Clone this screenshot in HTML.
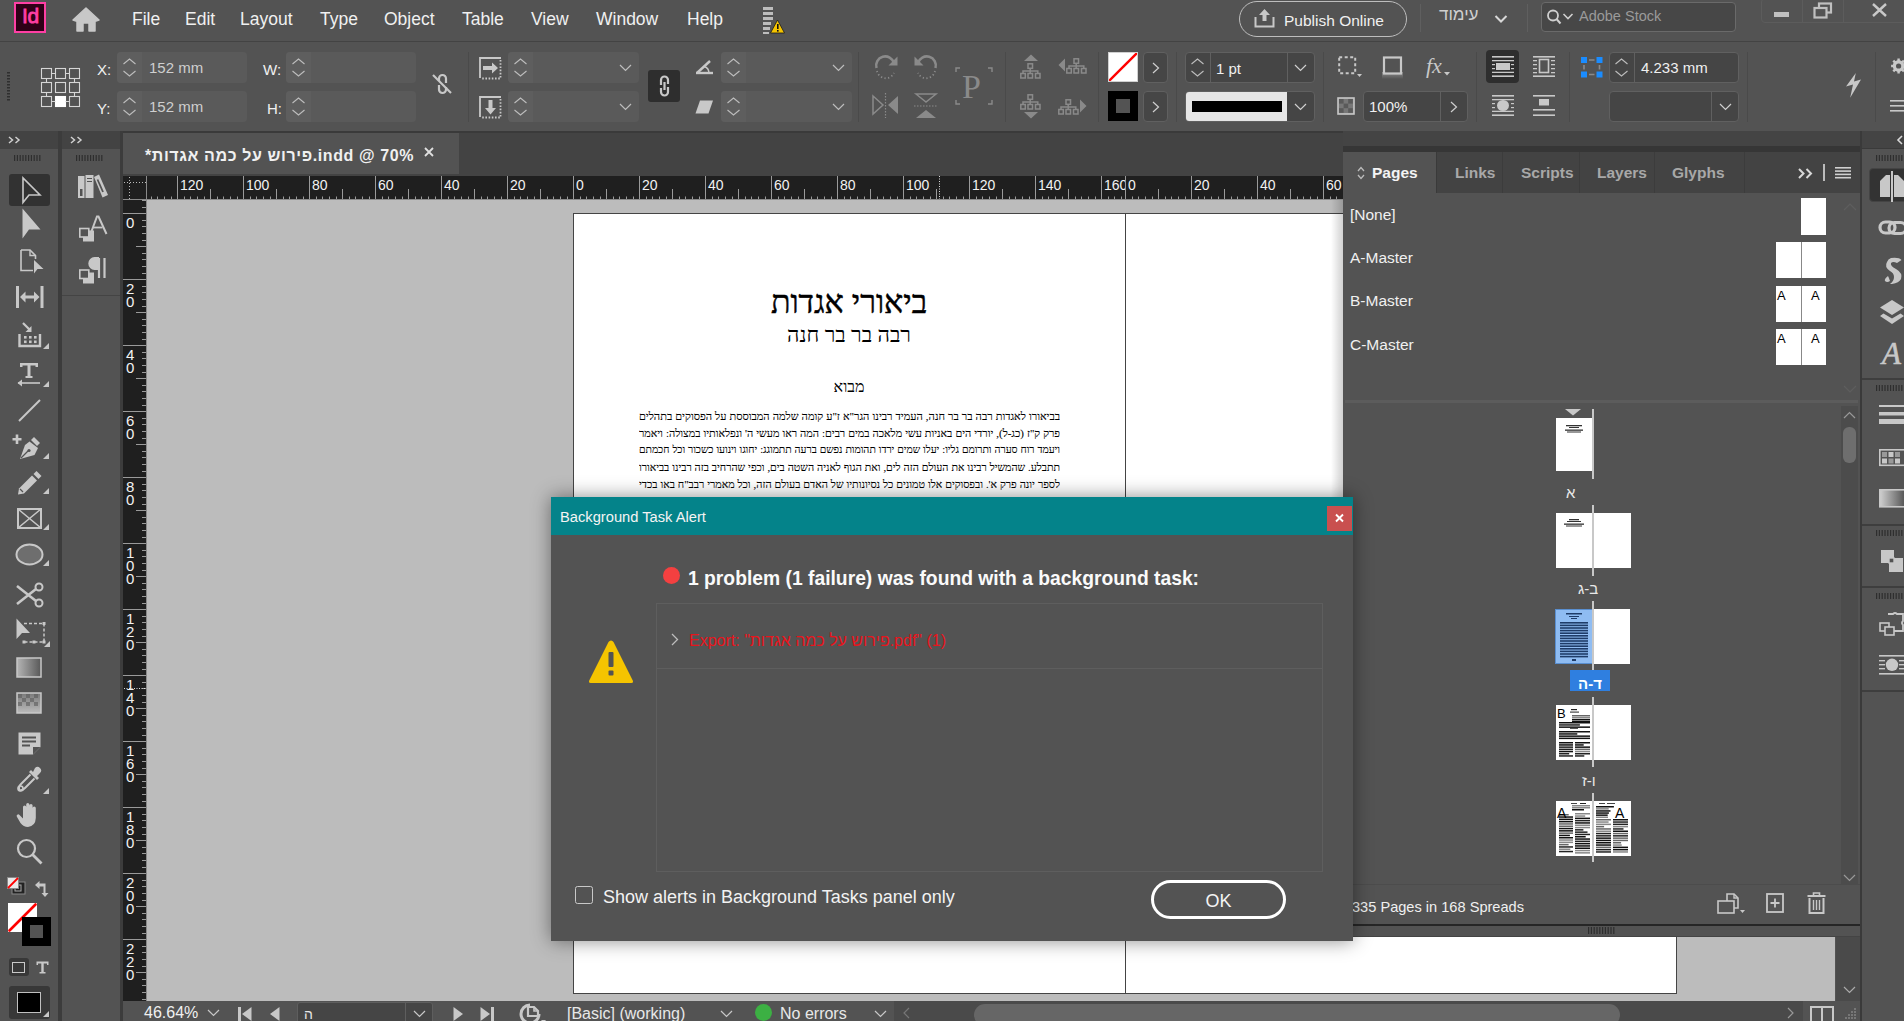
<!DOCTYPE html>
<html><head><meta charset="utf-8">
<style>
*{box-sizing:border-box;margin:0;padding:0}
html,body{width:1904px;height:1021px;overflow:hidden;background:#535353;font-family:"Liberation Sans",sans-serif;color:#e8e8e8}
.a{position:absolute}
svg{position:absolute;overflow:visible}
.t{position:absolute;white-space:nowrap;line-height:1}
.cl{font-size:15px;line-height:15px;color:#f0f0f0}
.cv{font-size:15px;line-height:15px;color:#cfcfcf}
.rl{top:178px;font-size:14px;line-height:14px;color:#f2f2f2}
.vrl{font-size:15px;line-height:13px;color:#f2f2f2;white-space:normal;width:12px}
.pl{left:639px;width:421px;font-family:"Liberation Serif";font-size:12.5px;line-height:14px;color:#000;-webkit-text-stroke:0.12px #000;direction:rtl;text-align:justify;text-align-last:justify;white-space:nowrap;overflow:hidden}
.ptab{top:165px;font-size:15.5px;line-height:16px;font-weight:700;color:#a8a8a8}
.pm{left:1350px;margin-top:1px;font-size:15.5px;line-height:16px;color:#f0f0f0}
.mi{top:10px;font-size:17.5px;line-height:18px;color:#f0f0f0}
</style></head><body>

<!-- MENU BAR -->
<div id="menubar" class="a" style="left:0;top:0;width:1904px;height:41px;background:#535353">
<div class="a" style="left:14px;top:2px;width:32px;height:31px;background:#2e0017;border:2px solid #ff3fa4"></div>
<div class="t" style="left:22px;top:5px;font-size:21px;line-height:22px;font-weight:400;color:#ff3fa4;letter-spacing:-0.3px;-webkit-text-stroke:0.8px #ff3fa4">Id</div>
<svg style="left:72px;top:7px" width="28" height="25" viewBox="0 0 28 25"><path d="M14 1 L27 13 L24 14 L23 14 V24 H17 V16 H11 V24 H5 V14 L4 14 L1 13 Z" fill="#c8c8c8" stroke="#c8c8c8" stroke-width="1.5" stroke-linejoin="round"/></svg>
<div class="t mi" style="left:132px">File</div>
<div class="t mi" style="left:185px">Edit</div>
<div class="t mi" style="left:240px">Layout</div>
<div class="t mi" style="left:320px">Type</div>
<div class="t mi" style="left:384px">Object</div>
<div class="t mi" style="left:462px">Table</div>
<div class="t mi" style="left:531px">View</div>
<div class="t mi" style="left:596px">Window</div>
<div class="t mi" style="left:687px">Help</div>
<svg style="left:762px;top:6px" width="24" height="28" viewBox="0 0 24 28"><g fill="#bdbdbd"><rect x="1" y="1" width="10" height="3"/><rect x="1" y="6" width="10" height="3"/><rect x="1" y="11" width="10" height="3"/><rect x="1" y="16" width="8" height="3"/><rect x="1" y="21" width="7" height="3"/><rect x="1" y="26" width="6" height="2"/></g><path d="M15.5 14 L22.5 27 H8.5 Z" fill="#f5c400" stroke="#1a1a1a" stroke-width="0.8"/><rect x="15" y="18" width="1.6" height="5" fill="#111"/><rect x="15" y="24" width="1.6" height="1.6" fill="#111"/></svg>
<div class="a" style="left:1239px;top:1px;width:168px;height:36px;border:1.5px solid #bdbdbd;border-radius:18px"></div>
<svg style="left:1254px;top:8px" width="21" height="20" viewBox="0 0 21 20"><path d="M10.5 1 L16 7 H12.5 V13 H8.5 V7 H5 Z" fill="#c8c8c8"/><path d="M1.5 9 V18.5 H19.5 V9" fill="none" stroke="#c8c8c8" stroke-width="2"/></svg>
<div class="t" style="left:1284px;top:13px;font-size:15.5px;line-height:16px;color:#f0f0f0">Publish Online</div>
<div class="a" style="left:1420px;top:4px;width:1px;height:28px;background:#5f5f5f"></div>
<div class="t" style="left:1439px;top:6px;font-size:17px;line-height:18px;color:#cfcfcf">&#1506;&#1497;&#1502;&#1493;&#1491;</div>
<svg style="left:1494px;top:14px" width="14" height="10" viewBox="0 0 14 10"><path d="M1.5 2 L7 7.5 L12.5 2" fill="none" stroke="#d8d8d8" stroke-width="2"/></svg>
<div class="a" style="left:1527px;top:4px;width:1px;height:28px;background:#5f5f5f"></div>
<div class="a" style="left:1541px;top:2px;width:195px;height:30px;background:#474747;border:1px solid #6a6a6a;border-radius:4px"></div>
<svg style="left:1546px;top:9px" width="32" height="17" viewBox="0 0 32 17"><circle cx="7" cy="6.5" r="5" fill="none" stroke="#cfcfcf" stroke-width="1.8"/><path d="M10.5 10 L14.5 14.5" stroke="#cfcfcf" stroke-width="2"/><path d="M17.5 5 L22 9.5 L26.5 5" fill="none" stroke="#cfcfcf" stroke-width="1.6"/></svg>
<div class="t" style="left:1579px;top:9px;font-size:14.5px;line-height:15px;color:#9a9a9a">Adobe Stock</div>
<div class="a" style="left:1761px;top:-2px;width:150px;height:25px;border:1px solid #5c5c5c;border-radius:4px"></div>
<div class="a" style="left:1802px;top:0;width:1px;height:23px;background:#5c5c5c"></div>
<div class="a" style="left:1843px;top:0;width:1px;height:23px;background:#5c5c5c"></div>
<div class="a" style="left:1774px;top:12px;width:15px;height:5px;background:#c0c0c0"></div>
<svg style="left:1813px;top:2px" width="20" height="17" viewBox="0 0 20 17"><rect x="6" y="1.5" width="12" height="9" fill="none" stroke="#c0c0c0" stroke-width="2.2"/><rect x="1.5" y="6" width="12" height="9.5" fill="#535353" stroke="#c0c0c0" stroke-width="2.2"/></svg>
<svg style="left:1871px;top:3px" width="17" height="14" viewBox="0 0 17 14"><path d="M2 1 L15 13 M15 1 L2 13" stroke="#c8c8c8" stroke-width="2.4"/></svg>
</div>
<div class="a" style="left:0;top:41px;width:1904px;height:1px;background:#434343"></div>

<!-- CONTROL BAR -->
<div id="ctrl" class="a" style="left:0;top:42px;width:1904px;height:89px;background:#535353"></div>
<svg style="left:7px;top:72px" width="4" height="30" viewBox="0 0 4 30"><g fill="#2f2f2f"><rect x="0" y="0" width="3" height="1.5"/><rect x="0" y="3" width="3" height="1.5"/><rect x="0" y="6" width="3" height="1.5"/><rect x="0" y="9" width="3" height="1.5"/><rect x="0" y="12" width="3" height="1.5"/><rect x="0" y="15" width="3" height="1.5"/><rect x="0" y="18" width="3" height="1.5"/><rect x="0" y="21" width="3" height="1.5"/><rect x="0" y="24" width="3" height="1.5"/><rect x="0" y="27" width="3" height="1.5"/></g></svg>
<svg style="left:41px;top:68px" width="38" height="38" viewBox="0 0 38 38"><g fill="none" stroke="#d6d6d6" stroke-width="1.1"><rect x="0.5" y="0.5" width="10" height="10"/><rect x="14.5" y="0.5" width="10" height="10"/><rect x="28.5" y="0.5" width="10" height="10"/><rect x="0.5" y="14.5" width="10" height="10"/><rect x="14.5" y="14.5" width="10" height="10"/><rect x="28.5" y="14.5" width="10" height="10"/><rect x="0.5" y="28.5" width="10" height="10"/><rect x="14.5" y="28.5" width="10" height="10" fill="#fff" stroke="#fff"/><rect x="28.5" y="28.5" width="10" height="10"/><path d="M10.5 5.5 H14.5 M24.5 5.5 H28.5 M10.5 33.5 H14.5 M24.5 33.5 H28.5 M5.5 10.5 V14.5 M5.5 24.5 V28.5 M33.5 10.5 V14.5 M33.5 24.5 V28.5"/></g></svg>
<div class="t cl" style="left:97px;top:62px">X:</div>
<div class="t cl" style="left:97px;top:101px">Y:</div>
<div class="a" style="left:117px;top:52px;width:130px;height:31px;background:#5a5a5a;border-radius:4px"></div><div class="a" style="left:117px;top:52px;width:25px;height:31px;background:#5e5e5e;border-radius:4px 0 0 4px"></div><svg style="left:122px;top:58px" width="15" height="19" viewBox="0 0 15 19"><path d="M1.5 6 L7.5 1 L13.5 6 M1.5 13 L7.5 18 L13.5 13" fill="none" stroke="#bdbdbd" stroke-width="1.1"/></svg>
<div class="a" style="left:117px;top:91px;width:130px;height:31px;background:#5a5a5a;border-radius:4px"></div><div class="a" style="left:117px;top:91px;width:25px;height:31px;background:#5e5e5e;border-radius:4px 0 0 4px"></div><svg style="left:122px;top:97px" width="15" height="19" viewBox="0 0 15 19"><path d="M1.5 6 L7.5 1 L13.5 6 M1.5 13 L7.5 18 L13.5 13" fill="none" stroke="#bdbdbd" stroke-width="1.1"/></svg>
<div class="t cv" style="left:149px;top:60px">152 mm</div>
<div class="t cv" style="left:149px;top:99px">152 mm</div>
<div class="t cl" style="left:263px;top:62px">W:</div>
<div class="t cl" style="left:267px;top:101px">H:</div>
<div class="a" style="left:286px;top:52px;width:130px;height:31px;background:#5a5a5a;border-radius:4px"></div><div class="a" style="left:286px;top:52px;width:25px;height:31px;background:#5e5e5e;border-radius:4px 0 0 4px"></div><svg style="left:291px;top:58px" width="15" height="19" viewBox="0 0 15 19"><path d="M1.5 6 L7.5 1 L13.5 6 M1.5 13 L7.5 18 L13.5 13" fill="none" stroke="#bdbdbd" stroke-width="1.1"/></svg>
<div class="a" style="left:286px;top:91px;width:130px;height:31px;background:#5a5a5a;border-radius:4px"></div><div class="a" style="left:286px;top:91px;width:25px;height:31px;background:#5e5e5e;border-radius:4px 0 0 4px"></div><svg style="left:291px;top:97px" width="15" height="19" viewBox="0 0 15 19"><path d="M1.5 6 L7.5 1 L13.5 6 M1.5 13 L7.5 18 L13.5 13" fill="none" stroke="#bdbdbd" stroke-width="1.1"/></svg>
<svg style="left:431px;top:72px" width="22" height="24" viewBox="0 0 22 24"><g fill="none" stroke="#c8c8c8" stroke-width="2.2"><path d="M8 9 V6.5 A3.5 3.5 0 0 1 15 6.5 V11"/><path d="M8 13 V17.5 A3.5 3.5 0 0 0 15 17.5 V15"/><path d="M2 3 L20 21"/></g></svg>
<div class="a" style="left:468px;top:52px;width:1px;height:70px;background:#4a4a4a"></div>
<svg style="left:479px;top:57px" width="23" height="22" viewBox="0 0 23 22"><path d="M1 21 V1 H22" fill="none" stroke="#c8c8c8" stroke-width="1.8"/><path d="M21.5 3 V21.5 H2" fill="none" stroke="#c8c8c8" stroke-width="1.8" stroke-dasharray="1.6 1.6"/><path d="M4 9 H13 V5.5 L19 11 L13 16.5 V13 H4 Z" fill="#c8c8c8"/></svg>
<svg style="left:479px;top:96px" width="23" height="22" viewBox="0 0 23 22"><path d="M1 21 V1 H22" fill="none" stroke="#c8c8c8" stroke-width="1.8"/><path d="M21.5 3 V21.5 H2" fill="none" stroke="#c8c8c8" stroke-width="1.8" stroke-dasharray="1.6 1.6"/><path d="M9.5 4 V12 H6 L11.5 18.5 L17 12 H13.5 V4 Z" fill="#c8c8c8"/></svg>
<div class="a" style="left:508px;top:52px;width:131px;height:31px;background:#5a5a5a;border-radius:4px"></div><div class="a" style="left:508px;top:52px;width:25px;height:31px;background:#5e5e5e;border-radius:4px 0 0 4px"></div><svg style="left:513px;top:58px" width="15" height="19" viewBox="0 0 15 19"><path d="M1.5 6 L7.5 1 L13.5 6 M1.5 13 L7.5 18 L13.5 13" fill="none" stroke="#bdbdbd" stroke-width="1.1"/></svg><svg style="left:619px;top:64px" width="13" height="8" viewBox="0 0 13 8"><path d="M1 1 L6.5 6.5 L12 1" fill="none" stroke="#bdbdbd" stroke-width="1.2"/></svg>
<div class="a" style="left:508px;top:91px;width:131px;height:31px;background:#5a5a5a;border-radius:4px"></div><div class="a" style="left:508px;top:91px;width:25px;height:31px;background:#5e5e5e;border-radius:4px 0 0 4px"></div><svg style="left:513px;top:97px" width="15" height="19" viewBox="0 0 15 19"><path d="M1.5 6 L7.5 1 L13.5 6 M1.5 13 L7.5 18 L13.5 13" fill="none" stroke="#bdbdbd" stroke-width="1.1"/></svg><svg style="left:619px;top:103px" width="13" height="8" viewBox="0 0 13 8"><path d="M1 1 L6.5 6.5 L12 1" fill="none" stroke="#bdbdbd" stroke-width="1.2"/></svg>
<div class="a" style="left:648px;top:70px;width:32px;height:32px;background:#2e2e2e;border-radius:3px"></div>
<svg style="left:656px;top:74px" width="16" height="24" viewBox="0 0 16 24"><g fill="none" stroke="#c8c8c8" stroke-width="2.2"><path d="M5 11 V6 A3.5 3.5 0 0 1 12 6 V10"/><path d="M5 14 V18 A3.5 3.5 0 0 0 12 18 V13"/><path d="M8.5 8 V16"/></g></svg>
<svg style="left:695px;top:59px" width="19" height="16" viewBox="0 0 19 16"><path d="M2 14 L15 2" stroke="#c8c8c8" stroke-width="2.4" fill="none"/><path d="M1 14 H18" stroke="#c8c8c8" stroke-width="2.4"/><path d="M9 7.5 A7 7 0 0 1 14 14" fill="none" stroke="#c8c8c8" stroke-width="1.5"/></svg>
<svg style="left:695px;top:100px" width="19" height="14" viewBox="0 0 19 14"><path d="M5 0.5 H18 L13.5 13.5 H0.5 Z" fill="#c8c8c8"/></svg>
<div class="a" style="left:721px;top:52px;width:131px;height:31px;background:#5a5a5a;border-radius:4px"></div><div class="a" style="left:721px;top:52px;width:25px;height:31px;background:#5e5e5e;border-radius:4px 0 0 4px"></div><svg style="left:726px;top:58px" width="15" height="19" viewBox="0 0 15 19"><path d="M1.5 6 L7.5 1 L13.5 6 M1.5 13 L7.5 18 L13.5 13" fill="none" stroke="#bdbdbd" stroke-width="1.1"/></svg><svg style="left:832px;top:64px" width="13" height="8" viewBox="0 0 13 8"><path d="M1 1 L6.5 6.5 L12 1" fill="none" stroke="#bdbdbd" stroke-width="1.2"/></svg>
<div class="a" style="left:721px;top:91px;width:131px;height:31px;background:#5a5a5a;border-radius:4px"></div><div class="a" style="left:721px;top:91px;width:25px;height:31px;background:#5e5e5e;border-radius:4px 0 0 4px"></div><svg style="left:726px;top:97px" width="15" height="19" viewBox="0 0 15 19"><path d="M1.5 6 L7.5 1 L13.5 6 M1.5 13 L7.5 18 L13.5 13" fill="none" stroke="#bdbdbd" stroke-width="1.1"/></svg><svg style="left:832px;top:103px" width="13" height="8" viewBox="0 0 13 8"><path d="M1 1 L6.5 6.5 L12 1" fill="none" stroke="#bdbdbd" stroke-width="1.2"/></svg>
<div class="a" style="left:858px;top:52px;width:1px;height:70px;background:#4a4a4a"></div>
<svg style="left:873px;top:54px" width="26" height="26" viewBox="0 0 26 26"><path d="M3.5 14 A9 9 0 0 1 21 9" fill="none" stroke="#8a8a8a" stroke-width="2.6"/><path d="M24.5 2.5 V11.5 H15.5 Z" fill="#8a8a8a"/><path d="M4 17 A9 9 0 0 0 21 19" fill="none" stroke="#8a8a8a" stroke-width="1.8" stroke-dasharray="1.2 2.4"/></svg>
<svg style="left:913px;top:54px" width="26" height="26" viewBox="0 0 26 26"><path d="M22.5 14 A9 9 0 0 0 5 9" fill="none" stroke="#8a8a8a" stroke-width="2.6"/><path d="M1.5 2.5 V11.5 H10.5 Z" fill="#8a8a8a"/><path d="M22 17 A9 9 0 0 1 5 19" fill="none" stroke="#8a8a8a" stroke-width="1.8" stroke-dasharray="1.2 2.4"/></svg>
<svg style="left:872px;top:93px" width="27" height="25" viewBox="0 0 27 25"><path d="M1 3 L11 12 L1 21 Z" fill="none" stroke="#8a8a8a" stroke-width="1.5"/><path d="M26 3 L16 12 L26 21 Z" fill="#8a8a8a"/><path d="M13.5 0 V25" stroke="#8a8a8a" stroke-width="1.2" stroke-dasharray="1.5 1.5"/></svg>
<svg style="left:914px;top:93px" width="24" height="26" viewBox="0 0 24 26"><path d="M2 1 L12 9 L22 1 Z" fill="none" stroke="#8a8a8a" stroke-width="1.5"/><path d="M2 25 L12 17 L22 25 Z" fill="#8a8a8a"/><path d="M0 13 H24" stroke="#8a8a8a" stroke-width="1.2" stroke-dasharray="1.5 1.5"/></svg>
<svg style="left:955px;top:67px" width="38" height="38" viewBox="0 0 38 38"><g fill="none" stroke="#8a8a8a" stroke-width="1.4"><path d="M1 5 V1 H5 M33 1 H37 V5 M37 33 V37 H33 M5 37 H1 V33"/></g></svg>
<div class="t" style="left:962px;top:70px;font-family:'Liberation Serif';font-size:34px;line-height:34px;color:#8a8a8a">P</div>
<div class="a" style="left:1005px;top:52px;width:1px;height:70px;background:#4a4a4a"></div>
<svg style="left:1021px;top:54px" width="20" height="8" viewBox="0 0 20 8"><path d="M3 7 L10 0.5 L17 7 Z" fill="#8a8a8a"/></svg>
<svg style="left:1020px;top:63px" width="21" height="16" viewBox="0 0 21 16"><g fill="none" stroke="#8a8a8a" stroke-width="1.5"><rect x="8" y="0.8" width="4.5" height="4.5"/><rect x="0.8" y="10.5" width="4.5" height="4.5"/><rect x="8" y="10.5" width="4.5" height="4.5"/><rect x="15.5" y="10.5" width="4.5" height="4.5"/><path d="M10.2 5.3 V10.5 M3 10.5 V8 H17.8 V10.5"/></g></svg>
<svg style="left:1020px;top:94px" width="21" height="16" viewBox="0 0 21 16"><g fill="none" stroke="#8a8a8a" stroke-width="1.5"><rect x="8" y="0.8" width="4.5" height="4.5"/><rect x="0.8" y="10.5" width="4.5" height="4.5"/><rect x="8" y="10.5" width="4.5" height="4.5"/><rect x="15.5" y="10.5" width="4.5" height="4.5"/><path d="M10.2 5.3 V10.5 M3 10.5 V8 H17.8 V10.5"/></g></svg>
<svg style="left:1021px;top:111px" width="20" height="8" viewBox="0 0 20 8"><path d="M3 1 L10 7.5 L17 1 Z" fill="#8a8a8a"/></svg>
<svg style="left:1058px;top:58px" width="8" height="14" viewBox="0 0 8 14"><path d="M7 0.5 L0.5 7 L7 13.5 Z" fill="#8a8a8a"/></svg>
<svg style="left:1066px;top:58px" width="21" height="16" viewBox="0 0 21 16"><g fill="none" stroke="#8a8a8a" stroke-width="1.5"><rect x="8" y="0.8" width="4.5" height="4.5"/><rect x="0.8" y="10.5" width="4.5" height="4.5"/><rect x="8" y="10.5" width="4.5" height="4.5"/><rect x="15.5" y="10.5" width="4.5" height="4.5"/><path d="M10.2 5.3 V10.5 M3 10.5 V8 H17.8 V10.5"/></g></svg>
<svg style="left:1058px;top:99px" width="21" height="16" viewBox="0 0 21 16"><g fill="none" stroke="#8a8a8a" stroke-width="1.5"><rect x="8" y="0.8" width="4.5" height="4.5"/><rect x="0.8" y="10.5" width="4.5" height="4.5"/><rect x="8" y="10.5" width="4.5" height="4.5"/><rect x="15.5" y="10.5" width="4.5" height="4.5"/><path d="M10.2 5.3 V10.5 M3 10.5 V8 H17.8 V10.5"/></g></svg>
<svg style="left:1079px;top:99px" width="8" height="14" viewBox="0 0 8 14"><path d="M1 0.5 L7.5 7 L1 13.5 Z" fill="#8a8a8a"/></svg>
<div class="a" style="left:1098px;top:52px;width:1px;height:70px;background:#4a4a4a"></div>
<div class="a" style="left:1108px;top:52px;width:30px;height:30px;background:#fff;border:1px solid #d0d0d0;overflow:hidden"><svg style="left:0;top:0" width="28" height="28" viewBox="0 0 28 28"><path d="M0 28 L28 0" stroke="#f00" stroke-width="2.4"/></svg></div>
<div class="a" style="left:1108px;top:91px;width:30px;height:30px;background:#000"></div>
<div class="a" style="left:1116px;top:99px;width:14px;height:14px;background:#535353"></div>
<div class="a" style="left:1143px;top:52px;width:25px;height:31px;background:#464646;border:1px solid #606060;border-radius:4px"></div><svg style="left:1152px;top:62px" width="8" height="12" viewBox="0 0 8 12"><path d="M1 1 L6.5 6 L1 11" fill="none" stroke="#cfcfcf" stroke-width="1.2"/></svg>
<div class="a" style="left:1143px;top:91px;width:25px;height:31px;background:#464646;border:1px solid #606060;border-radius:4px"></div><svg style="left:1152px;top:101px" width="8" height="12" viewBox="0 0 8 12"><path d="M1 1 L6.5 6 L1 11" fill="none" stroke="#cfcfcf" stroke-width="1.2"/></svg>
<div class="a" style="left:1176px;top:52px;width:1px;height:70px;background:#4a4a4a"></div>
<div class="a" style="left:1185px;top:52px;width:130px;height:31px;background:#454545;border:1px solid #606060;border-radius:4px"></div>
<div class="a" style="left:1210px;top:53px;width:1px;height:29px;background:#606060"></div>
<div class="a" style="left:1287px;top:53px;width:1px;height:29px;background:#606060"></div>
<svg style="left:1190px;top:58px" width="15" height="19" viewBox="0 0 15 19"><path d="M1.5 6 L7.5 1 L13.5 6 M1.5 13 L7.5 18 L13.5 13" fill="none" stroke="#bdbdbd" stroke-width="1.1"/></svg>
<div class="t cv" style="left:1216px;top:61px;color:#f0f0f0">1 pt</div>
<svg style="left:1294px;top:64px" width="13" height="8" viewBox="0 0 13 8"><path d="M1 1 L6.5 6.5 L12 1" fill="none" stroke="#d0d0d0" stroke-width="1.2"/></svg>
<div class="a" style="left:1185px;top:91px;width:130px;height:31px;background:#454545;border:1px solid #606060;border-radius:4px"></div>
<div class="a" style="left:1186px;top:92px;width:101px;height:29px;background:#e6e6e6;border-radius:3px 0 0 3px"></div>
<div class="a" style="left:1192px;top:101px;width:90px;height:11px;background:#000"></div>
<svg style="left:1294px;top:103px" width="13" height="8" viewBox="0 0 13 8"><path d="M1 1 L6.5 6.5 L12 1" fill="none" stroke="#d0d0d0" stroke-width="1.2"/></svg>
<div class="a" style="left:1323px;top:52px;width:1px;height:70px;background:#4a4a4a"></div>
<svg style="left:1338px;top:56px" width="25" height="22" viewBox="0 0 25 22"><rect x="1.2" y="1.2" width="16" height="16" fill="none" stroke="#c8c8c8" stroke-width="2" stroke-dasharray="3 2.5"/><path d="M19 18 H24 L21.5 21 Z" fill="#c8c8c8"/></svg>
<svg style="left:1382px;top:56px" width="22" height="24" viewBox="0 0 22 24"><defs><linearGradient id="sg" x1="0" y1="0" x2="0" y2="1"><stop offset="0" stop-color="#8a8a8a"/><stop offset="1" stop-color="#535353"/></linearGradient></defs><rect x="0" y="16" width="21" height="7" fill="url(#sg)"/><rect x="2" y="1.5" width="17" height="16" fill="#535353" stroke="#c8c8c8" stroke-width="2.2"/></svg>
<div class="t" style="left:1426px;top:55px;font-family:'Liberation Serif';font-style:italic;font-size:22px;line-height:22px;color:#c8c8c8">fx</div>
<svg style="left:1444px;top:72px" width="6" height="4" viewBox="0 0 6 4"><path d="M0 0 H6 L3 3.5 Z" fill="#c8c8c8"/></svg>
<svg style="left:1337px;top:97px" width="18" height="18" viewBox="0 0 18 18"><rect x="1" y="1" width="16" height="16" fill="#777" stroke="#c8c8c8" stroke-width="1.6"/><g fill="#5a5a5a"><rect x="2" y="2" width="4.6" height="4.6"/><rect x="11.2" y="2" width="4.6" height="4.6"/><rect x="6.6" y="6.6" width="4.6" height="4.6"/><rect x="2" y="11.2" width="4.6" height="4.6"/><rect x="11.2" y="11.2" width="4.6" height="4.6"/></g></svg>
<div class="a" style="left:1363px;top:91px;width:105px;height:31px;background:#454545;border:1px solid #606060;border-radius:4px"></div>
<div class="a" style="left:1440px;top:92px;width:1px;height:29px;background:#606060"></div>
<div class="t cv" style="left:1369px;top:99px;color:#f0f0f0">100%</div>
<svg style="left:1450px;top:101px" width="8" height="12" viewBox="0 0 8 12"><path d="M1 1 L6.5 6 L1 11" fill="none" stroke="#cfcfcf" stroke-width="1.2"/></svg>
<div class="a" style="left:1476px;top:52px;width:1px;height:70px;background:#4a4a4a"></div>
<div class="a" style="left:1486px;top:50px;width:33px;height:33px;background:#2e2e2e;border-radius:4px"></div>
<svg style="left:1492px;top:56px" width="22" height="21" viewBox="0 0 22 21"><g fill="#c8c8c8"><rect x="0" y="0" width="22" height="1.6"/><rect x="0" y="19.4" width="22" height="1.6"/><rect x="0" y="4" width="22" height="1.3"/><rect x="0" y="15.7" width="22" height="1.3"/><rect x="4" y="7" width="14" height="7"/><rect x="0" y="8" width="3" height="1.2"/><rect x="19" y="8" width="3" height="1.2"/><rect x="0" y="12" width="3" height="1.2"/><rect x="19" y="12" width="3" height="1.2"/></g></svg>
<svg style="left:1533px;top:56px" width="22" height="21" viewBox="0 0 22 21"><g fill="#c8c8c8"><rect x="0" y="0" width="22" height="1.6"/><rect x="0" y="19.4" width="22" height="1.6"/><rect x="0" y="4" width="4" height="1.3"/><rect x="18" y="4" width="4" height="1.3"/><rect x="0" y="8" width="4" height="1.3"/><rect x="18" y="8" width="4" height="1.3"/><rect x="0" y="12" width="4" height="1.3"/><rect x="18" y="12" width="4" height="1.3"/><rect x="0" y="16" width="4" height="1.3"/><rect x="18" y="16" width="4" height="1.3"/></g><rect x="6.5" y="3.5" width="9" height="13" fill="none" stroke="#c8c8c8" stroke-width="1.6"/><g></g></svg>
<svg style="left:1492px;top:95px" width="22" height="21" viewBox="0 0 22 21"><g fill="#c8c8c8"><rect x="0" y="0" width="22" height="1.6"/><rect x="0" y="19.4" width="22" height="1.6"/><rect x="0" y="4" width="22" height="1.3"/><rect x="0" y="15.7" width="22" height="1.3"/><ellipse cx="11" cy="10.5" rx="6" ry="5.5"/><rect x="0" y="8" width="3" height="1.2"/><rect x="19" y="8" width="3" height="1.2"/><rect x="0" y="12" width="3" height="1.2"/><rect x="19" y="12" width="3" height="1.2"/></g></svg>
<svg style="left:1533px;top:95px" width="22" height="21" viewBox="0 0 22 21"><g fill="#c8c8c8"><rect x="0" y="0" width="22" height="1.6"/><rect x="0" y="19.4" width="22" height="1.6"/><rect x="0" y="14" width="22" height="1.6"/><rect x="6" y="4" width="10" height="6.5"/></g></svg>
<div class="a" style="left:1569px;top:52px;width:1px;height:70px;background:#4a4a4a"></div>
<svg style="left:1581px;top:57px" width="22" height="21" viewBox="0 0 22 21"><g fill="#1a8cff"><rect x="0" y="0" width="6" height="6"/><rect x="15.5" y="0" width="6" height="6"/><rect x="0" y="14.5" width="6" height="6"/><rect x="15.5" y="14.5" width="6" height="6"/></g><path d="M8 3 H13.5 M8 17.5 H13.5 M3 8 V12.5 M18.5 8 V12.5" stroke="#8a8a8a" stroke-width="1.6"/></svg>
<div class="a" style="left:1609px;top:52px;width:130px;height:31px;background:#454545;border:1px solid #606060;border-radius:4px"></div>
<div class="a" style="left:1634px;top:53px;width:1px;height:29px;background:#606060"></div>
<svg style="left:1614px;top:58px" width="15" height="19" viewBox="0 0 15 19"><path d="M1.5 6 L7.5 1 L13.5 6 M1.5 13 L7.5 18 L13.5 13" fill="none" stroke="#bdbdbd" stroke-width="1.1"/></svg>
<div class="t cv" style="left:1641px;top:60px;color:#f0f0f0">4.233 mm</div>
<div class="a" style="left:1609px;top:91px;width:130px;height:31px;background:#454545;border:1px solid #606060;border-radius:4px"></div>
<div class="a" style="left:1711px;top:92px;width:1px;height:29px;background:#606060"></div>
<svg style="left:1719px;top:103px" width="13" height="8" viewBox="0 0 13 8"><path d="M1 1 L6.5 6.5 L12 1" fill="none" stroke="#d0d0d0" stroke-width="1.2"/></svg>
<div class="a" style="left:1747px;top:52px;width:1px;height:70px;background:#4a4a4a"></div>
<svg style="left:1845px;top:72px" width="17" height="27" viewBox="0 0 17 27"><path d="M10.8 1 L1 14.5 L8 12.5 L5.2 25.7 L16 7.5 L9 9.5 Z" fill="#c8c8c8"/></svg>
<div class="a" style="left:1875px;top:52px;width:1px;height:70px;background:#4a4a4a"></div>
<svg style="left:1889px;top:58px" width="20" height="17" viewBox="0 0 20 17"><path d="M15.07 6.78 L17.10 6.79 L17.10 9.21 L15.07 9.22 L14.33 11.00 L15.76 12.45 L14.05 14.16 L12.60 12.73 L10.82 13.47 L10.81 15.50 L8.39 15.50 L8.38 13.47 L6.60 12.73 L5.15 14.16 L3.44 12.45 L4.87 11.00 L4.13 9.22 L2.10 9.21 L2.10 6.79 L4.13 6.78 L4.87 5.00 L3.44 3.55 L5.15 1.84 L6.60 3.27 L8.38 2.53 L8.39 0.50 L10.81 0.50 L10.82 2.53 L12.60 3.27 L14.05 1.84 L15.76 3.55 L14.33 5.00 Z" fill="#c8c8c8"/><circle cx="9.6" cy="8" r="5.8" fill="#c8c8c8"/><circle cx="9.6" cy="8" r="2.6" fill="#535353"/></svg>
<svg style="left:1890px;top:100px" width="16" height="12" viewBox="0 0 16 12"><g fill="#c8c8c8"><rect x="0" y="0" width="16" height="1.6"/><rect x="0" y="5" width="16" height="1.6"/><rect x="0" y="10" width="16" height="1.6"/></g></svg>

<!-- left collapse strips -->
<div class="a" style="left:0;top:131px;width:123px;height:890px;background:#3c3c3c"></div>
<div class="a" style="left:0;top:131px;width:58px;height:18px;background:#434343"></div>
<div class="a" style="left:62px;top:131px;width:58px;height:18px;background:#434343"></div>
<div class="a" style="left:0;top:149px;width:58px;height:872px;background:#535353"></div>
<div class="a" style="left:62px;top:149px;width:58px;height:872px;background:#535353"></div>
<svg style="left:8px;top:136px" width="14" height="8" viewBox="0 0 14 8"><path d="M1 1 L4.5 4 L1 7 M7.5 1 L11 4 L7.5 7" fill="none" stroke="#d0d0d0" stroke-width="1.5"/></svg>
<svg style="left:70px;top:136px" width="14" height="8" viewBox="0 0 14 8"><path d="M1 1 L4.5 4 L1 7 M7.5 1 L11 4 L7.5 7" fill="none" stroke="#d0d0d0" stroke-width="1.5"/></svg>
<svg style="left:14px;top:155px" width="30" height="6" viewBox="0 0 30 6"><g fill="#2e2e2e"><rect x="0.0" y="0" width="1.2" height="6"/><rect x="2.8" y="0" width="1.2" height="6"/><rect x="5.6" y="0" width="1.2" height="6"/><rect x="8.399999999999999" y="0" width="1.2" height="6"/><rect x="11.2" y="0" width="1.2" height="6"/><rect x="14.0" y="0" width="1.2" height="6"/><rect x="16.799999999999997" y="0" width="1.2" height="6"/><rect x="19.599999999999998" y="0" width="1.2" height="6"/><rect x="22.4" y="0" width="1.2" height="6"/><rect x="25.2" y="0" width="1.2" height="6"/></g></svg>
<svg style="left:76px;top:155px" width="30" height="6" viewBox="0 0 30 6"><g fill="#2e2e2e"><rect x="0.0" y="0" width="1.2" height="6"/><rect x="2.8" y="0" width="1.2" height="6"/><rect x="5.6" y="0" width="1.2" height="6"/><rect x="8.399999999999999" y="0" width="1.2" height="6"/><rect x="11.2" y="0" width="1.2" height="6"/><rect x="14.0" y="0" width="1.2" height="6"/><rect x="16.799999999999997" y="0" width="1.2" height="6"/><rect x="19.599999999999998" y="0" width="1.2" height="6"/><rect x="22.4" y="0" width="1.2" height="6"/><rect x="25.2" y="0" width="1.2" height="6"/></g></svg>
<div class="a" style="left:9px;top:174px;width:41px;height:32px;background:#323232;border-radius:3px"></div>
<svg style="left:22px;top:177px" width="19" height="27" viewBox="0 0 19 27"><path d="M1 1 V25.5 L7 18 H18 Z" fill="none" stroke="#c8c8c8" stroke-width="1.6" stroke-linejoin="miter"/></svg>
<svg style="left:22px;top:208px" width="19" height="31" viewBox="0 0 19 31"><path d="M0.5 0.5 V30.5 L7 21.5 H18.5 Z" fill="#c8c8c8"/></svg>
<svg style="left:20px;top:249px" width="24" height="25" viewBox="0 0 24 25"><path d="M1 1 H10 L15.5 6.5 V10 M1 1 V21.5 H13" fill="none" stroke="#c8c8c8" stroke-width="1.6"/><path d="M10 1 V6.5 H15.5" fill="none" stroke="#c8c8c8" stroke-width="1.4"/><path d="M14 11 V24.5 L17.5 20 H23.5 Z" fill="#c8c8c8"/></svg>
<svg style="left:16px;top:286px" width="28" height="23" viewBox="0 0 28 23"><rect x="0" y="0" width="3" height="22" fill="#c8c8c8"/><rect x="24.5" y="0" width="3" height="22" fill="#c8c8c8"/><path d="M4 11 L9.5 5.5 V9.5 H18 V5.5 L23.5 11 L18 16.5 V12.5 H9.5 V16.5 Z" fill="#c8c8c8"/></svg>
<svg style="left:18px;top:322px" width="24" height="26" viewBox="0 0 24 26"><path d="M5 1 L12 8" stroke="#c8c8c8" stroke-width="2.2"/><path d="M13.5 4 V10 H7.5 Z" fill="#c8c8c8"/><path d="M1.5 12 V24 H22 V12" fill="none" stroke="#c8c8c8" stroke-width="2.4"/><g fill="#c8c8c8"><rect x="6" y="14" width="2.6" height="2.6"/><rect x="11" y="14" width="2.6" height="2.6"/><rect x="16" y="14" width="2.6" height="2.6"/><rect x="6" y="18.5" width="2.6" height="2.6"/><rect x="11" y="18.5" width="2.6" height="2.6"/><rect x="16" y="18.5" width="2.6" height="2.6"/></g></svg>
<svg style="left:43px;top:343px" width="6" height="6" viewBox="0 0 6 6"><path d="M6 0 V6 H0 Z" fill="#c8c8c8"/></svg>
<svg style="left:17px;top:362px" width="24" height="25" viewBox="0 0 24 25"><path d="M3 1 H21 V5 H18.5 V3.5 H13.5 V14 H15.5 V16 H8.5 V14 H10.5 V3.5 H5.5 V5 H3 Z" fill="#c8c8c8"/><path d="M1 21 H23" stroke="#c8c8c8" stroke-width="1.6"/><path d="M0.5 21 L5 17.5 V24.5 Z" fill="#c8c8c8"/></svg>
<svg style="left:43px;top:381px" width="6" height="6" viewBox="0 0 6 6"><path d="M6 0 V6 H0 Z" fill="#c8c8c8"/></svg>
<svg style="left:18px;top:399px" width="23" height="23" viewBox="0 0 23 23"><path d="M1 22 L22 1" stroke="#c8c8c8" stroke-width="2"/></svg>
<svg style="left:12px;top:434px" width="34" height="26" viewBox="0 0 34 26"><path d="M5 0.5 V10 M0.5 5.2 H9.5" stroke="#c8c8c8" stroke-width="2.6"/><path d="M22 3 L28 9 L25 12 L19 6 Z" fill="#c8c8c8"/><path d="M17.5 7.5 L26 14 L22.5 21 L8 25 L13 11 Z" fill="#c8c8c8"/><path d="M9 24 L16 17" stroke="#535353" stroke-width="1.2"/><circle cx="17" cy="16.5" r="1.6" fill="#535353"/></svg>
<svg style="left:43px;top:453px" width="6" height="6" viewBox="0 0 6 6"><path d="M6 0 V6 H0 Z" fill="#c8c8c8"/></svg>
<svg style="left:17px;top:470px" width="26" height="25" viewBox="0 0 26 25"><path d="M19.5 1 L24.5 6 L21.5 9 L16.5 4 Z" fill="#c8c8c8"/><path d="M15 5.5 L20 10.5 L7 23.5 L1 24.5 L2 18.5 Z" fill="#c8c8c8"/><path d="M3 19 L6 22" stroke="#535353" stroke-width="1.2"/></svg>
<svg style="left:43px;top:488px" width="6" height="6" viewBox="0 0 6 6"><path d="M6 0 V6 H0 Z" fill="#c8c8c8"/></svg>
<svg style="left:17px;top:508px" width="25" height="21" viewBox="0 0 25 21"><rect x="1" y="1" width="23" height="19" fill="none" stroke="#c8c8c8" stroke-width="2"/><path d="M1 1 L24 20 M24 1 L1 20" stroke="#c8c8c8" stroke-width="1.6"/></svg>
<svg style="left:43px;top:524px" width="6" height="6" viewBox="0 0 6 6"><path d="M6 0 V6 H0 Z" fill="#c8c8c8"/></svg>
<svg style="left:15px;top:543px" width="29" height="23" viewBox="0 0 29 23"><ellipse cx="14.5" cy="11.5" rx="13" ry="10" fill="#6e6e6e" stroke="#c8c8c8" stroke-width="2"/></svg>
<svg style="left:43px;top:560px" width="6" height="6" viewBox="0 0 6 6"><path d="M6 0 V6 H0 Z" fill="#c8c8c8"/></svg>
<svg style="left:16px;top:582px" width="28" height="26" viewBox="0 0 28 26"><circle cx="23" cy="5" r="3.5" fill="none" stroke="#c8c8c8" stroke-width="2"/><circle cx="23" cy="21" r="3.5" fill="none" stroke="#c8c8c8" stroke-width="2"/><path d="M1 4 L20 19 M1 22 L20 7" stroke="#c8c8c8" stroke-width="2.6"/></svg>
<svg style="left:16px;top:618px" width="34" height="29" viewBox="0 0 34 29"><path d="M0.5 0.5 V21 L6 15 H14 Z" fill="#c8c8c8"/><path d="M8 5.5 H28 V24 H8" fill="none" stroke="#c8c8c8" stroke-width="1.5" stroke-dasharray="3 2"/><g fill="#c8c8c8"><rect x="6.5" y="22.5" width="3" height="3"/><rect x="26.5" y="4" width="3" height="3"/><rect x="26.5" y="22.5" width="3" height="3"/><rect x="16.5" y="22.5" width="3" height="3"/></g><path d="M34 23 V29 H28 Z" fill="#c8c8c8"/></svg>
<svg style="left:16px;top:657px" width="26" height="21" viewBox="0 0 26 21"><defs><linearGradient id="g1" x1="0" y1="0" x2="1" y2="0"><stop offset="0" stop-color="#b5b5b5"/><stop offset="1" stop-color="#585858"/></linearGradient></defs><rect x="1" y="1" width="24" height="19" fill="url(#g1)" stroke="#c8c8c8" stroke-width="1.5"/></svg>
<svg style="left:16px;top:692px" width="26" height="22" viewBox="0 0 26 22"><defs><linearGradient id="g2" x1="0" y1="0" x2="0" y2="1"><stop offset="0" stop-color="#7a7a7a"/><stop offset="1" stop-color="#bbbbbb"/></linearGradient></defs><rect x="1" y="1" width="24" height="20" fill="url(#g2)" stroke="#c8c8c8" stroke-width="1.5"/><g fill="#5c5c5c" opacity=".6"><rect x="2" y="2" width="4" height="4"/><rect x="10" y="2" width="4" height="4"/><rect x="18" y="2" width="4" height="4"/><rect x="6" y="6" width="4" height="4"/><rect x="14" y="6" width="4" height="4"/><rect x="2" y="10" width="4" height="4"/><rect x="10" y="10" width="4" height="4"/><rect x="18" y="10" width="4" height="4"/></g></svg>
<svg style="left:18px;top:732px" width="23" height="23" viewBox="0 0 23 23"><path d="M0.5 0.5 H22.5 V15 L15 22.5 H0.5 Z" fill="#c8c8c8"/><path d="M4 5.5 H18 M4 9.5 H18 M4 13.5 H12" stroke="#535353" stroke-width="1.8"/><path d="M22.5 15 H15 V22.5" fill="#535353"/></svg>
<svg style="left:16px;top:766px" width="28" height="27" viewBox="0 0 28 27"><path d="M19 2 A3.5 3.5 0 0 1 24 7 L21 10 L23 12 L21 14 L13 6 L15 4 L17 6 Z" fill="#c8c8c8"/><path d="M14.5 8.5 L5 18 Q2 21 3 24 Q6 25 9 22 L18.5 12.5" fill="none" stroke="#c8c8c8" stroke-width="2"/><circle cx="4.5" cy="22.5" r="2.5" fill="none" stroke="#c8c8c8" stroke-width="1.6"/></svg>
<svg style="left:43px;top:788px" width="6" height="6" viewBox="0 0 6 6"><path d="M6 0 V6 H0 Z" fill="#c8c8c8"/></svg>
<svg style="left:16px;top:802px" width="26" height="26" viewBox="0 0 26 26"><path d="M7 13 V5 A1.6 1.6 0 0 1 10.2 5 V11 V2.5 A1.6 1.6 0 0 1 13.4 2.5 V11 V3.5 A1.6 1.6 0 0 1 16.6 3.5 V11.5 V6 A1.6 1.6 0 0 1 19.8 6 V16 Q19.5 24 12 25 Q7.5 25 4.5 21 L1 15 A1.6 1.6 0 0 1 3.5 13 L7 16.5 Z" fill="#c8c8c8"/></svg>
<svg style="left:16px;top:838px" width="27" height="27" viewBox="0 0 27 27"><circle cx="10.5" cy="10.5" r="8.5" fill="none" stroke="#c8c8c8" stroke-width="2.2"/><path d="M16.5 16.5 L25.5 25.5" stroke="#c8c8c8" stroke-width="2.8"/></svg>
<svg style="left:7px;top:877px" width="19" height="18" viewBox="0 0 19 18"><rect x="5" y="5" width="13" height="12" fill="#222" stroke="#888" stroke-width="1"/><rect x="8" y="8" width="6" height="6" fill="none" stroke="#aaa" stroke-width="1"/><rect x="0.5" y="0.5" width="11" height="11" fill="#e8e8e8" stroke="#888" stroke-width="1"/><path d="M1 11 L11 1" stroke="#f00" stroke-width="1.8"/></svg>
<svg style="left:34px;top:880px" width="17" height="18" viewBox="0 0 17 18"><path d="M1 5 L5.5 1 V3.5 H11.5 V13 H14.5 L11 17 L7.5 13 H9.5 V6.5 H5.5 V9 Z" fill="#c8c8c8"/></svg>
<div class="a" style="left:8px;top:903px;width:29px;height:29px;background:#fff;overflow:hidden"><svg style="left:0;top:0" width="29" height="29" viewBox="0 0 29 29"><path d="M1.5 27.5 L27.5 1.5" stroke="#f00" stroke-width="2.6" stroke-linecap="round"/></svg></div>
<div class="a" style="left:22px;top:917px;width:29px;height:29px;background:#000"></div>
<div class="a" style="left:30px;top:925px;width:13px;height:13px;background:#535353"></div>
<div class="a" style="left:9px;top:958px;width:20px;height:18px;background:#383838;border-radius:3px"></div>
<div class="a" style="left:12px;top:962px;width:13px;height:11px;border:1.5px solid #c8c8c8"></div>
<svg style="left:36px;top:961px" width="13" height="13" viewBox="0 0 13 13"><path d="M0.5 0.5 H12.5 V4 H11 V2.5 H7.7 V11 H9.5 V12.5 H3.5 V11 H5.3 V2.5 H2 V4 H0.5 Z" fill="#c8c8c8"/></svg>
<div class="a" style="left:9px;top:986px;width:41px;height:33px;background:#383838;border-radius:3px"></div>
<div class="a" style="left:17px;top:992px;width:24px;height:21px;background:#000;border:1px solid #c0c0c0"></div>
<svg style="left:43px;top:1011px" width="6" height="6" viewBox="0 0 6 6"><path d="M6 0 V6 H0 Z" fill="#c8c8c8"/></svg>
<div class="a" style="left:62px;top:295px;width:58px;height:1px;background:#444"></div>
<svg style="left:77px;top:174px" width="31" height="25" viewBox="0 0 31 25"><rect x="1" y="2" width="6.5" height="22" fill="#c8c8c8"/><rect x="3" y="15" width="2.5" height="7" fill="#535353"/><rect x="8.5" y="1" width="8" height="23" fill="#c8c8c8"/><path d="M10 4.5 H15 M10 7.5 H15" stroke="#535353" stroke-width="1.1"/><path d="M17 3 L22 0.5 L31 21 L25.5 23.5 Z" fill="#c8c8c8"/><path d="M20.5 5.5 L26 18" stroke="#535353" stroke-width="1.8"/></svg>
<svg style="left:79px;top:215px" width="30" height="28" viewBox="0 0 30 28"><path d="M11.5 19 L18 1.5 H19.5 L27.5 19" fill="none" stroke="#c8c8c8" stroke-width="2"/><path d="M14 12.5 H23.5" stroke="#c8c8c8" stroke-width="1.8"/><rect x="4" y="15.5" width="11" height="11" fill="#c8c8c8"/><rect x="0.8" y="13.5" width="9" height="8.5" fill="#535353" stroke="#c8c8c8" stroke-width="1.6"/></svg>

<svg style="left:79px;top:257px" width="30" height="28" viewBox="0 0 30 28"><path d="M25.5 1 V21 M20 1 V21" stroke="#c8c8c8" stroke-width="2.2"/><path d="M26.5 0 H15.5 A6.2 6.5 0 0 0 15.5 13 H20 V0 Z" fill="#c8c8c8"/><rect x="4" y="15.5" width="11" height="11" fill="#c8c8c8"/><rect x="0.8" y="13" width="9" height="8.5" fill="#535353" stroke="#c8c8c8" stroke-width="1.6"/></svg>

<!-- DOC AREA -->
<div class="a" style="left:123px;top:131px;width:1739px;height:45px;background:#434343"></div>
<div class="a" style="left:123px;top:133px;width:336px;height:41px;background:#535353"></div>
<div class="a" style="left:123px;top:176px;width:1220px;height:24px;background:#1f1f1f"></div>
<div class="a" style="left:123px;top:200px;width:24px;height:801px;background:#1f1f1f"></div>
<div class="a" style="left:123px;top:131px;width:1739px;height:2px;background:#3a3a3a"></div>
<div class="t" style="left:145px;top:148px;font-size:16px;line-height:16px;font-weight:700;color:#f0f0f0;letter-spacing:0.6px">*&#1508;&#1497;&#1512;&#1493;&#1513; &#1506;&#1500; &#1499;&#1502;&#1492; &#1488;&#1490;&#1491;&#1493;&#1514;.indd @ 70%</div>
<svg style="left:424px;top:147px" width="10" height="10" viewBox="0 0 10 10"><path d="M1 1 L9 9 M9 1 L1 9" stroke="#e0e0e0" stroke-width="1.8"/></svg>
<svg style="left:123px;top:176px" width="1220" height="24" viewBox="0 0 1220 24"><g stroke="#9a9a9a" stroke-width="1"><path d="M28.5 20.5 V23"/><path d="M34.5 20.5 V23"/><path d="M41.5 20.5 V23"/><path d="M48.5 20.5 V23"/><path d="M54.5 0 V23"/><path d="M61.5 20.5 V23"/><path d="M67.5 20.5 V23"/><path d="M74.5 20.5 V23"/><path d="M81.5 20.5 V23"/><path d="M87.5 13 V23"/><path d="M94.5 20.5 V23"/><path d="M100.5 20.5 V23"/><path d="M107.5 20.5 V23"/><path d="M114.5 20.5 V23"/><path d="M120.5 0 V23"/><path d="M127.5 20.5 V23"/><path d="M133.5 20.5 V23"/><path d="M140.5 20.5 V23"/><path d="M147.5 20.5 V23"/><path d="M153.5 13 V23"/><path d="M160.5 20.5 V23"/><path d="M166.5 20.5 V23"/><path d="M173.5 20.5 V23"/><path d="M180.5 20.5 V23"/><path d="M186.5 0 V23"/><path d="M193.5 20.5 V23"/><path d="M199.5 20.5 V23"/><path d="M206.5 20.5 V23"/><path d="M213.5 20.5 V23"/><path d="M219.5 13 V23"/><path d="M226.5 20.5 V23"/><path d="M232.5 20.5 V23"/><path d="M239.5 20.5 V23"/><path d="M246.5 20.5 V23"/><path d="M252.5 0 V23"/><path d="M259.5 20.5 V23"/><path d="M265.5 20.5 V23"/><path d="M272.5 20.5 V23"/><path d="M279.5 20.5 V23"/><path d="M285.5 13 V23"/><path d="M292.5 20.5 V23"/><path d="M298.5 20.5 V23"/><path d="M305.5 20.5 V23"/><path d="M312.5 20.5 V23"/><path d="M318.5 0 V23"/><path d="M325.5 20.5 V23"/><path d="M331.5 20.5 V23"/><path d="M338.5 20.5 V23"/><path d="M345.5 20.5 V23"/><path d="M351.5 13 V23"/><path d="M358.5 20.5 V23"/><path d="M364.5 20.5 V23"/><path d="M371.5 20.5 V23"/><path d="M378.5 20.5 V23"/><path d="M384.5 0 V23"/><path d="M391.5 20.5 V23"/><path d="M397.5 20.5 V23"/><path d="M404.5 20.5 V23"/><path d="M411.5 20.5 V23"/><path d="M417.5 13 V23"/><path d="M424.5 20.5 V23"/><path d="M430.5 20.5 V23"/><path d="M437.5 20.5 V23"/><path d="M444.5 20.5 V23"/><path d="M450.5 0 V23"/><path d="M457.5 20.5 V23"/><path d="M463.5 20.5 V23"/><path d="M470.5 20.5 V23"/><path d="M477.5 20.5 V23"/><path d="M483.5 13 V23"/><path d="M490.5 20.5 V23"/><path d="M496.5 20.5 V23"/><path d="M503.5 20.5 V23"/><path d="M510.5 20.5 V23"/><path d="M516.5 0 V23"/><path d="M523.5 20.5 V23"/><path d="M529.5 20.5 V23"/><path d="M536.5 20.5 V23"/><path d="M543.5 20.5 V23"/><path d="M549.5 13 V23"/><path d="M556.5 20.5 V23"/><path d="M562.5 20.5 V23"/><path d="M569.5 20.5 V23"/><path d="M576.5 20.5 V23"/><path d="M582.5 0 V23"/><path d="M589.5 20.5 V23"/><path d="M595.5 20.5 V23"/><path d="M602.5 20.5 V23"/><path d="M609.5 20.5 V23"/><path d="M615.5 13 V23"/><path d="M622.5 20.5 V23"/><path d="M628.5 20.5 V23"/><path d="M635.5 20.5 V23"/><path d="M642.5 20.5 V23"/><path d="M648.5 0 V23"/><path d="M655.5 20.5 V23"/><path d="M661.5 20.5 V23"/><path d="M668.5 20.5 V23"/><path d="M675.5 20.5 V23"/><path d="M681.5 13 V23"/><path d="M688.5 20.5 V23"/><path d="M694.5 20.5 V23"/><path d="M701.5 20.5 V23"/><path d="M708.5 20.5 V23"/><path d="M714.5 0 V23"/><path d="M721.5 20.5 V23"/><path d="M727.5 20.5 V23"/><path d="M734.5 20.5 V23"/><path d="M741.5 20.5 V23"/><path d="M747.5 13 V23"/><path d="M754.5 20.5 V23"/><path d="M760.5 20.5 V23"/><path d="M767.5 20.5 V23"/><path d="M774.5 20.5 V23"/><path d="M780.5 0 V23"/><path d="M787.5 20.5 V23"/><path d="M793.5 20.5 V23"/><path d="M800.5 20.5 V23"/><path d="M807.5 20.5 V23"/><path d="M813.5 13 V23"/><path d="M820.5 20.5 V23"/><path d="M826.5 20.5 V23"/><path d="M833.5 20.5 V23"/><path d="M840.5 20.5 V23"/><path d="M846.5 0 V23"/><path d="M853.5 20.5 V23"/><path d="M859.5 20.5 V23"/><path d="M866.5 20.5 V23"/><path d="M873.5 20.5 V23"/><path d="M879.5 13 V23"/><path d="M886.5 20.5 V23"/><path d="M892.5 20.5 V23"/><path d="M899.5 20.5 V23"/><path d="M906.5 20.5 V23"/><path d="M912.5 0 V23"/><path d="M919.5 20.5 V23"/><path d="M925.5 20.5 V23"/><path d="M932.5 20.5 V23"/><path d="M939.5 20.5 V23"/><path d="M945.5 13 V23"/><path d="M952.5 20.5 V23"/><path d="M958.5 20.5 V23"/><path d="M965.5 20.5 V23"/><path d="M972.5 20.5 V23"/><path d="M978.5 0 V23"/><path d="M985.5 20.5 V23"/><path d="M991.5 20.5 V23"/><path d="M998.5 20.5 V23"/><path d="M1002.5 0 V23"/><path d="M1009.5 20.5 V23"/><path d="M1015.5 20.5 V23"/><path d="M1022.5 20.5 V23"/><path d="M1029.5 20.5 V23"/><path d="M1035.5 13 V23"/><path d="M1042.5 20.5 V23"/><path d="M1048.5 20.5 V23"/><path d="M1055.5 20.5 V23"/><path d="M1062.5 20.5 V23"/><path d="M1068.5 0 V23"/><path d="M1075.5 20.5 V23"/><path d="M1081.5 20.5 V23"/><path d="M1088.5 20.5 V23"/><path d="M1095.5 20.5 V23"/><path d="M1101.5 13 V23"/><path d="M1108.5 20.5 V23"/><path d="M1114.5 20.5 V23"/><path d="M1121.5 20.5 V23"/><path d="M1128.5 20.5 V23"/><path d="M1134.5 0 V23"/><path d="M1141.5 20.5 V23"/><path d="M1147.5 20.5 V23"/><path d="M1154.5 20.5 V23"/><path d="M1161.5 20.5 V23"/><path d="M1167.5 13 V23"/><path d="M1174.5 20.5 V23"/><path d="M1180.5 20.5 V23"/><path d="M1187.5 20.5 V23"/><path d="M1194.5 20.5 V23"/><path d="M1200.5 0 V23"/><path d="M1207.5 20.5 V23"/><path d="M1213.5 20.5 V23"/><path d="M1220.5 20.5 V23"/><path d="M0 23.5 H1220" stroke="#8a8a8a"/><path d="M23.5 0 V24" stroke="#8a8a8a"/></g><path d="M6.5 1 V23 M1 6.5 H23" stroke="#bdbdbd" stroke-width="1" stroke-dasharray="1 2"/><path d="M816.5 0 V23" stroke="#e0e0e0" stroke-width="1" stroke-dasharray="1 1.5"/></svg>
<div class="t rl" style="left:180px">120</div>
<div class="t rl" style="left:246px">100</div>
<div class="t rl" style="left:312px">80</div>
<div class="t rl" style="left:378px">60</div>
<div class="t rl" style="left:444px">40</div>
<div class="t rl" style="left:510px">20</div>
<div class="t rl" style="left:576px">0</div>
<div class="t rl" style="left:642px">20</div>
<div class="t rl" style="left:708px">40</div>
<div class="t rl" style="left:774px">60</div>
<div class="t rl" style="left:840px">80</div>
<div class="t rl" style="left:906px">100</div>
<div class="t rl" style="left:972px">120</div>
<div class="t rl" style="left:1038px">140</div>
<div class="t rl" style="left:1104px;width:21px;overflow:hidden">160</div>
<div class="t rl" style="left:1128px">0</div>
<div class="t rl" style="left:1194px">20</div>
<div class="t rl" style="left:1260px">40</div>
<div class="t rl" style="left:1326px">60</div>
<svg style="left:123px;top:200px" width="24" height="801" viewBox="0 0 24 801"><g stroke="#9a9a9a" stroke-width="1"><path d="M19 0.5 H24"/><path d="M19 7.5 H24"/><path d="M0 13.5 H24"/><path d="M19 20.5 H24"/><path d="M19 26.5 H24"/><path d="M19 33.5 H24"/><path d="M19 40.5 H24"/><path d="M13 46.5 H24"/><path d="M19 53.5 H24"/><path d="M19 59.5 H24"/><path d="M19 66.5 H24"/><path d="M19 73.5 H24"/><path d="M0 79.5 H24"/><path d="M19 86.5 H24"/><path d="M19 92.5 H24"/><path d="M19 99.5 H24"/><path d="M19 106.5 H24"/><path d="M13 112.5 H24"/><path d="M19 119.5 H24"/><path d="M19 125.5 H24"/><path d="M19 132.5 H24"/><path d="M19 139.5 H24"/><path d="M0 145.5 H24"/><path d="M19 152.5 H24"/><path d="M19 158.5 H24"/><path d="M19 165.5 H24"/><path d="M19 172.5 H24"/><path d="M13 178.5 H24"/><path d="M19 185.5 H24"/><path d="M19 191.5 H24"/><path d="M19 198.5 H24"/><path d="M19 205.5 H24"/><path d="M0 211.5 H24"/><path d="M19 218.5 H24"/><path d="M19 224.5 H24"/><path d="M19 231.5 H24"/><path d="M19 238.5 H24"/><path d="M13 244.5 H24"/><path d="M19 251.5 H24"/><path d="M19 257.5 H24"/><path d="M19 264.5 H24"/><path d="M19 271.5 H24"/><path d="M0 277.5 H24"/><path d="M19 284.5 H24"/><path d="M19 290.5 H24"/><path d="M19 297.5 H24"/><path d="M19 304.5 H24"/><path d="M13 310.5 H24"/><path d="M19 317.5 H24"/><path d="M19 323.5 H24"/><path d="M19 330.5 H24"/><path d="M19 337.5 H24"/><path d="M0 343.5 H24"/><path d="M19 350.5 H24"/><path d="M19 356.5 H24"/><path d="M19 363.5 H24"/><path d="M19 370.5 H24"/><path d="M13 376.5 H24"/><path d="M19 383.5 H24"/><path d="M19 389.5 H24"/><path d="M19 396.5 H24"/><path d="M19 403.5 H24"/><path d="M0 409.5 H24"/><path d="M19 416.5 H24"/><path d="M19 422.5 H24"/><path d="M19 429.5 H24"/><path d="M19 436.5 H24"/><path d="M13 442.5 H24"/><path d="M19 449.5 H24"/><path d="M19 455.5 H24"/><path d="M19 462.5 H24"/><path d="M19 469.5 H24"/><path d="M0 475.5 H24"/><path d="M19 482.5 H24"/><path d="M19 488.5 H24"/><path d="M19 495.5 H24"/><path d="M19 502.5 H24"/><path d="M13 508.5 H24"/><path d="M19 515.5 H24"/><path d="M19 521.5 H24"/><path d="M19 528.5 H24"/><path d="M19 535.5 H24"/><path d="M0 541.5 H24"/><path d="M19 548.5 H24"/><path d="M19 554.5 H24"/><path d="M19 561.5 H24"/><path d="M19 568.5 H24"/><path d="M13 574.5 H24"/><path d="M19 581.5 H24"/><path d="M19 587.5 H24"/><path d="M19 594.5 H24"/><path d="M19 601.5 H24"/><path d="M0 607.5 H24"/><path d="M19 614.5 H24"/><path d="M19 620.5 H24"/><path d="M19 627.5 H24"/><path d="M19 634.5 H24"/><path d="M13 640.5 H24"/><path d="M19 647.5 H24"/><path d="M19 653.5 H24"/><path d="M19 660.5 H24"/><path d="M19 667.5 H24"/><path d="M0 673.5 H24"/><path d="M19 680.5 H24"/><path d="M19 686.5 H24"/><path d="M19 693.5 H24"/><path d="M19 700.5 H24"/><path d="M13 706.5 H24"/><path d="M19 713.5 H24"/><path d="M19 719.5 H24"/><path d="M19 726.5 H24"/><path d="M19 733.5 H24"/><path d="M0 739.5 H24"/><path d="M19 746.5 H24"/><path d="M19 752.5 H24"/><path d="M19 759.5 H24"/><path d="M19 766.5 H24"/><path d="M13 772.5 H24"/><path d="M19 779.5 H24"/><path d="M19 785.5 H24"/><path d="M19 792.5 H24"/><path d="M19 799.5 H24"/><path d="M23.5 0 V801" stroke="#8a8a8a"/></g><path d="M1 488.5 H23" stroke="#e0e0e0" stroke-width="1" stroke-dasharray="1 1.5"/></svg>
<div class="t vrl" style="left:126px;top:216px">0</div>
<div class="t vrl" style="left:126px;top:282px">2<br>0</div>
<div class="t vrl" style="left:126px;top:348px">4<br>0</div>
<div class="t vrl" style="left:126px;top:414px">6<br>0</div>
<div class="t vrl" style="left:126px;top:480px">8<br>0</div>
<div class="t vrl" style="left:126px;top:546px">1<br>0<br>0</div>
<div class="t vrl" style="left:126px;top:612px">1<br>2<br>0</div>
<div class="t vrl" style="left:126px;top:678px">1<br>4<br>0</div>
<div class="t vrl" style="left:126px;top:744px">1<br>6<br>0</div>
<div class="t vrl" style="left:126px;top:810px">1<br>8<br>0</div>
<div class="t vrl" style="left:126px;top:876px">2<br>0<br>0</div>
<div class="t vrl" style="left:126px;top:942px">2<br>2<br>0</div>
<div class="a" style="left:147px;top:200px;width:1688px;height:801px;background:#bcbcbc"></div>
<div class="a" style="left:573px;top:213px;width:1104px;height:781px;background:#fff;border:1px solid #444"></div>
<div class="a" style="left:1125px;top:213px;width:1px;height:781px;background:#444"></div>
<div class="t" style="left:573px;top:286px;width:552px;text-align:center;font-family:'Liberation Serif';font-size:32px;line-height:32px;font-weight:400;color:#000;direction:rtl;-webkit-text-stroke:0.5px #000">&#1489;&#1497;&#1488;&#1493;&#1512;&#1497; &#1488;&#1490;&#1491;&#1493;&#1514;</div>
<div class="t" style="left:573px;top:324px;width:552px;text-align:center;font-family:'Liberation Serif';font-size:21.6px;line-height:22px;color:#000;direction:rtl">&#1512;&#1489;&#1492; &#1489;&#1512; &#1489;&#1512; &#1495;&#1504;&#1492;</div>
<div class="t" style="left:573px;top:379px;width:552px;text-align:center;font-family:'Liberation Serif';font-size:16px;line-height:16px;color:#000;direction:rtl">&#1502;&#1489;&#1493;&#1488;</div>
<div class="t pl" style="top:408.5px;font-size:10.99px">בביאורו לאגדות רבה בר בר חנה, העמיד רבינו הגר"א ז"ע קומה שלמה המבוססת על הפסוקים בתהלים</div>
<div class="t pl" style="top:425.7px;font-size:10.85px">פרק ק"ז (כג-ל), יורדי הים באניות עשי מלאכה במים רבים: המה ראו מעשי ה' ונפלאותיו במצולה: ויאמר</div>
<div class="t pl" style="top:442.9px;font-size:10.47px">ויעמד רוח סערה ותרומם גליו: יעלו שמים ירדו תהומות נפשם ברעה תתמוגג: יחוגו וינועו כשכור וכל חכמתם</div>
<div class="t pl" style="top:460.1px;font-size:10.69px">תתבלע. שהמשיל רבינו את העולם הזה לים, ואת הגוף לאניה השטה בים, וכפי שהרחיב בזה רבינו בביאורו</div>
<div class="t pl" style="top:477.3px;font-size:10.76px">לספר יונה פרק א'. ובפסוקים אלו טמונים כל נסיונותיו של האדם בעולם הזה, וכל מאמרי רבב"ח באו בכדי</div>
<div class="t pl" style="top:494.5px;font-size:11.00px">להורות לאדם את הדרך אשר ילך בה ואת המעשה אשר יעשה בעולמו, ולכן נקראו בשם אגדות הים</div>

<!-- STATUS BAR -->
<div class="a" style="left:123px;top:1001px;width:1739px;height:20px;background:#535353"></div>
<div class="t" style="left:144px;top:1005px;font-size:16px;line-height:16px;color:#f0f0f0">46.64%</div>
<svg style="left:207px;top:1009px" width="13" height="8" viewBox="0 0 13 8"><path d="M1 1 L6.5 6.5 L12 1" fill="none" stroke="#c8c8c8" stroke-width="1.2"/></svg>
<svg style="left:238px;top:1007px" width="14" height="14" viewBox="0 0 14 14"><rect x="0" y="0" width="3" height="14" fill="#c8c8c8"/><path d="M13.5 0 L4 7 L13.5 14 Z" fill="#c8c8c8"/></svg>
<svg style="left:270px;top:1007px" width="10" height="14" viewBox="0 0 10 14"><path d="M9.5 0 L0 7 L9.5 14 Z" fill="#c8c8c8"/></svg>
<div class="a" style="left:297px;top:1002px;width:136px;height:24px;background:#454545;border:1px solid #5e5e5e;border-radius:3px"></div>
<div class="a" style="left:405px;top:1003px;width:1px;height:18px;background:#5e5e5e"></div>
<div class="t" style="left:304px;top:1007px;font-size:14px;line-height:14px;color:#e8e8e8">&#1492;</div>
<svg style="left:413px;top:1010px" width="13" height="8" viewBox="0 0 13 8"><path d="M1 1 L6.5 6.5 L12 1" fill="none" stroke="#c8c8c8" stroke-width="1.2"/></svg>
<svg style="left:453px;top:1007px" width="10" height="14" viewBox="0 0 10 14"><path d="M0.5 0 L10 7 L0.5 14 Z" fill="#c8c8c8"/></svg>
<svg style="left:480px;top:1007px" width="14" height="14" viewBox="0 0 14 14"><rect x="11" y="0" width="3" height="14" fill="#c8c8c8"/><path d="M0.5 0 L10 7 L0.5 14 Z" fill="#c8c8c8"/></svg>
<svg style="left:519px;top:1003px" width="28" height="20" viewBox="0 0 28 20"><path d="M11 2 A9 9 0 1 0 20 11" fill="none" stroke="#c8c8c8" stroke-width="3"/><path d="M9 4 H15 L19 8 V13 H9 Z" fill="none" stroke="#c8c8c8" stroke-width="2.2"/><path d="M15 4 V8 H19" fill="none" stroke="#c8c8c8" stroke-width="1.6"/><path d="M22 17 H27 L24.5 20 Z" fill="#c8c8c8"/></svg>
<div class="t" style="left:567px;top:1006px;font-size:16px;line-height:16px;color:#e8e8e8">[Basic] (working)</div>
<svg style="left:720px;top:1010px" width="13" height="8" viewBox="0 0 13 8"><path d="M1 1 L6.5 6.5 L12 1" fill="none" stroke="#c8c8c8" stroke-width="1.2"/></svg>
<div class="a" style="left:755px;top:1004px;width:17px;height:17px;border-radius:50%;background:#3cb043"></div>
<div class="t" style="left:780px;top:1006px;font-size:16px;line-height:16px;color:#e8e8e8">No errors</div>
<svg style="left:874px;top:1010px" width="13" height="8" viewBox="0 0 13 8"><path d="M1 1 L6.5 6.5 L12 1" fill="none" stroke="#c8c8c8" stroke-width="1.2"/></svg>
<div class="a" style="left:894px;top:1001px;width:966px;height:20px;background:#4a4a4a"></div>
<svg style="left:903px;top:1007px" width="7" height="12" viewBox="0 0 7 12"><path d="M6 1 L1 6 L6 11" fill="none" stroke="#777" stroke-width="1.2"/></svg>
<div class="a" style="left:974px;top:1004px;width:646px;height:22px;background:#666;border-radius:11px"></div>
<svg style="left:1787px;top:1007px" width="7" height="12" viewBox="0 0 7 12"><path d="M1 1 L6 6 L1 11" fill="none" stroke="#999" stroke-width="1.2"/></svg>
<div class="a" style="left:1803px;top:1001px;width:57px;height:20px;background:#535353"></div>
<svg style="left:1810px;top:1006px" width="24" height="16" viewBox="0 0 24 16"><path d="M1 16 V1 H23 V16 M12 1 V16" fill="none" stroke="#c8c8c8" stroke-width="2"/></svg>
<svg style="left:1845px;top:1008px" width="12" height="12" viewBox="0 0 12 12"><g fill="#777"><rect x="9" y="0" width="2" height="2"/><rect x="6" y="3" width="2" height="2"/><rect x="9" y="3" width="2" height="2"/><rect x="3" y="6" width="2" height="2"/><rect x="6" y="6" width="2" height="2"/><rect x="9" y="6" width="2" height="2"/><rect x="0" y="9" width="2" height="2"/><rect x="3" y="9" width="2" height="2"/><rect x="6" y="9" width="2" height="2"/><rect x="9" y="9" width="2" height="2"/></g></svg>
<div class="a" style="left:1836px;top:937px;width:24px;height:64px;background:#4a4a4a"></div>
<svg style="left:1843px;top:986px" width="13" height="8" viewBox="0 0 13 8"><path d="M1 1 L6.5 6.5 L12 1" fill="none" stroke="#aaa" stroke-width="1.2"/></svg>

<!-- PAGES PANEL -->
<div class="a" style="left:1343px;top:146px;width:517px;height:6px;background:#363636"></div>
<div class="a" style="left:1343px;top:152px;width:517px;height:41px;background:#434343"></div>
<div class="a" style="left:1343px;top:152px;width:93px;height:41px;background:#535353"></div>
<div class="a" style="left:1343px;top:193px;width:517px;height:732px;background:#535353"></div>
<div class="a" style="left:1331px;top:200px;width:12px;height:725px;background:linear-gradient(to right, rgba(0,0,0,0), rgba(0,0,0,.18))"></div>
<div class="a" style="left:1343px;top:131px;width:517px;height:15px;background:#444"></div>
<div class="a" style="left:1436px;top:152px;width:1px;height:41px;background:#3a3a3a"></div>
<div class="a" style="left:1502px;top:152px;width:1px;height:41px;background:#3c3c3c"></div>
<div class="a" style="left:1579px;top:152px;width:1px;height:41px;background:#3c3c3c"></div>
<div class="a" style="left:1654px;top:152px;width:1px;height:41px;background:#3c3c3c"></div>
<div class="a" style="left:1744px;top:152px;width:1px;height:41px;background:#3c3c3c"></div>
<svg style="left:1357px;top:166px" width="8" height="14" viewBox="0 0 8 14"><path d="M1 5 L4 1.5 L7 5 M1 9 L4 12.5 L7 9" fill="none" stroke="#bbb" stroke-width="1.3"/></svg>
<div class="t ptab" style="left:1372px;color:#f4f4f4">Pages</div>
<div class="t ptab" style="left:1455px">Links</div>
<div class="t ptab" style="left:1521px">Scripts</div>
<div class="t ptab" style="left:1597px">Layers</div>
<div class="t ptab" style="left:1672px">Glyphs</div>
<svg style="left:1798px;top:168px" width="15" height="11" viewBox="0 0 15 11"><path d="M1 1 L5.5 5.5 L1 10 M8.5 1 L13 5.5 L8.5 10" fill="none" stroke="#d8d8d8" stroke-width="2"/></svg>
<div class="a" style="left:1823px;top:164px;width:2px;height:17px;background:#bbb"></div>
<svg style="left:1835px;top:167px" width="16" height="12" viewBox="0 0 16 12"><g fill="#d0d0d0"><rect x="0" y="0" width="16" height="1.6"/><rect x="0" y="3.3" width="16" height="1.6"/><rect x="0" y="6.6" width="16" height="1.6"/><rect x="0" y="9.9" width="16" height="1.6"/></g></svg>
<div class="t pm" style="top:206px">[None]</div>
<div class="t pm" style="top:249px">A-Master</div>
<div class="t pm" style="top:292px">B-Master</div>
<div class="t pm" style="top:336px">C-Master</div>
<div class="a" style="left:1801px;top:198px;width:25px;height:37px;background:#fff"></div>
<div class="a" style="left:1776px;top:242px;width:50px;height:36px;background:#fff"></div><div class="a" style="left:1801px;top:242px;width:1px;height:36px;background:#888"></div>
<div class="a" style="left:1776px;top:286px;width:50px;height:36px;background:#fff"></div><div class="a" style="left:1801px;top:286px;width:1px;height:36px;background:#888"></div><div class="t" style="left:1777px;top:289px;font-size:13px;line-height:13px;color:#000">A</div><div class="t" style="left:1811px;top:289px;font-size:13px;line-height:13px;color:#000">A</div>
<div class="a" style="left:1776px;top:329px;width:50px;height:36px;background:#fff"></div><div class="a" style="left:1801px;top:329px;width:1px;height:36px;background:#888"></div><div class="t" style="left:1777px;top:332px;font-size:13px;line-height:13px;color:#000">A</div><div class="t" style="left:1811px;top:332px;font-size:13px;line-height:13px;color:#000">A</div>
<svg style="left:1843px;top:203px" width="14" height="8" viewBox="0 0 14 8"><path d="M1 7 L7 1 L13 7" fill="none" stroke="#5e5e5e" stroke-width="1.2"/></svg>
<svg style="left:1843px;top:385px" width="14" height="8" viewBox="0 0 14 8"><path d="M1 1 L7 7 L13 1" fill="none" stroke="#5e5e5e" stroke-width="1.2"/></svg>
<div class="a" style="left:1345px;top:400px;width:513px;height:3px;background:#5c5c5c"></div>
<div class="a" style="left:1841px;top:406px;width:17px;height:478px;background:#4c4c4c"></div>
<svg style="left:1843px;top:411px" width="13" height="8" viewBox="0 0 13 8"><path d="M1 7 L6.5 1.5 L12 7" fill="none" stroke="#999" stroke-width="1.2"/></svg>
<div class="a" style="left:1843px;top:427px;width:13px;height:36px;background:#6e6e6e;border-radius:6px"></div>
<svg style="left:1843px;top:874px" width="13" height="8" viewBox="0 0 13 8"><path d="M1 1 L6.5 6.5 L12 1" fill="none" stroke="#999" stroke-width="1.2"/></svg>
<svg style="left:1565px;top:409px" width="16" height="7" viewBox="0 0 16 7"><path d="M0 0 H16 L8 6.5 Z" fill="#c8c8c8"/></svg>
<div class="a" style="left:1556px;top:418px;width:36px;height:53px;background:#fff"></div>
<svg style="left:1562px;top:425px" width="24" height="9" viewBox="0 0 24 9"><g fill="#333"><rect x="4" y="0" width="16" height="1.3"/><rect x="7" y="2" width="10" height="1"/><rect x="3" y="4.5" width="18" height="1.3"/><rect x="5" y="6.5" width="14" height="1"/></g></svg>
<div class="a" style="left:1592px;top:409px;width:2px;height:70px;background:#c8c8c8"></div>
<div class="t" style="left:1566px;top:485px;font-size:15px;line-height:15px;color:#e8e8e8">&#1488;</div>
<div class="a" style="left:1556px;top:513px;width:75px;height:55px;background:#fff"></div>
<svg style="left:1562px;top:519px" width="24" height="9" viewBox="0 0 24 9"><g fill="#333"><rect x="7" y="0" width="10" height="1.3"/><rect x="5" y="2" width="14" height="1"/><rect x="2" y="4.5" width="20" height="1.3"/><rect x="4" y="6.5" width="16" height="1"/></g></svg>
<div class="a" style="left:1592px;top:505px;width:2px;height:71px;background:#c8c8c8"></div>
<div class="t" style="left:1578px;top:581px;font-size:15px;line-height:15px;color:#e8e8e8">&#1489;-&#1490;</div>
<div class="a" style="left:1555px;top:609px;width:38px;height:55px;background:#8fbcf2;border:1px solid #5a8fd0"></div>
<svg style="left:1558px;top:612px" width="32" height="50" viewBox="0 0 32 50"><g fill="#1f3c68"><rect x="8" y="1" width="16" height="1.5"/><rect x="11" y="4" width="10" height="1"/><rect x="13" y="6" width="6" height="1"/><rect x="2" y="10.0" width="28" height="1.6"/><rect x="2" y="12.6" width="28" height="1.6"/><rect x="2" y="15.2" width="28" height="1.6"/><rect x="2" y="17.8" width="28" height="1.6"/><rect x="2" y="20.4" width="28" height="1.6"/><rect x="2" y="23.0" width="28" height="1.6"/><rect x="2" y="25.6" width="28" height="1.6"/><rect x="2" y="28.2" width="28" height="1.6"/><rect x="2" y="30.8" width="28" height="1.6"/><rect x="2" y="33.4" width="28" height="1.6"/><rect x="2" y="36.0" width="28" height="1.6"/><rect x="2" y="38.6" width="28" height="1.6"/><rect x="2" y="41.2" width="28" height="1.6"/><rect x="2" y="43.8" width="28" height="1.6"/><rect x="14" y="47" width="4" height="2"/></g></svg>
<div class="a" style="left:1594px;top:609px;width:36px;height:55px;background:#fff"></div>
<div class="a" style="left:1592px;top:601px;width:2px;height:70px;background:#c8c8c8"></div>
<div class="a" style="left:1570px;top:670px;width:40px;height:21px;background:#2f7fe0"></div>
<div class="t" style="left:1570px;top:676px;width:40px;text-align:center;font-size:15px;line-height:15px;font-weight:700;color:#fff">&#1491;-&#1492;</div>
<div class="a" style="left:1556px;top:705px;width:75px;height:55px;background:#fff"></div>
<svg style="left:1556px;top:705px" width="37" height="55" viewBox="0 0 37 55"><rect x="15" y="4" width="6" height="1.2" fill="#222"/><rect x="14" y="6.5" width="9" height="1.2" fill="#444"/><rect x="16" y="10.0" width="18.0" height="1.5" fill="#666"/><rect x="16" y="12.0" width="18.0" height="1.5" fill="#888"/><rect x="16" y="14.0" width="18.0" height="1.5" fill="#111"/><rect x="16" y="16.0" width="18.0" height="1.5" fill="#111"/><rect x="3" y="17.0" width="31.0" height="1.5" fill="#111"/><rect x="3" y="19.2" width="20.9" height="1.5" fill="#222"/><rect x="3" y="21.4" width="31.0" height="1.5" fill="#111"/><rect x="14" y="23" width="8" height="1" fill="#555"/><rect x="3" y="26.0" width="31.0" height="1.5" fill="#111"/><rect x="3" y="28.2" width="18.3" height="1.5" fill="#111"/><rect x="3" y="30.4" width="31.0" height="1.5" fill="#111"/><rect x="3" y="32.6" width="31.0" height="1.5" fill="#111"/><rect x="3" y="37.0" width="14.0" height="1.5" fill="#111"/><rect x="3" y="39.2" width="14.0" height="1.5" fill="#111"/><rect x="3" y="41.4" width="14.0" height="1.5" fill="#222"/><rect x="3" y="43.6" width="14.0" height="1.5" fill="#222"/><rect x="3" y="45.8" width="14.0" height="1.5" fill="#111"/><rect x="3" y="48.0" width="10.2" height="1.5" fill="#222"/><rect x="3" y="50.2" width="14.0" height="1.5" fill="#222"/><rect x="19" y="37.0" width="15.0" height="1.5" fill="#111"/><rect x="19" y="39.2" width="8.7" height="1.5" fill="#111"/><rect x="19" y="41.4" width="15.0" height="1.5" fill="#111"/><rect x="19" y="43.6" width="15.0" height="1.5" fill="#666"/><rect x="19" y="45.8" width="15.0" height="1.5" fill="#888"/><rect x="19" y="48.0" width="15.0" height="1.5" fill="#222"/><rect x="19" y="50.2" width="9.3" height="1.5" fill="#222"/></svg>
<div class="t" style="left:1557px;top:707px;font-size:13px;line-height:13px;color:#000">B</div>
<div class="a" style="left:1592px;top:697px;width:2px;height:70px;background:#c8c8c8"></div>
<div class="t" style="left:1582px;top:773px;font-size:15px;line-height:15px;color:#e8e8e8">&#1493;-&#1494;</div>
<div class="a" style="left:1556px;top:801px;width:75px;height:55px;background:#fff"></div>
<svg style="left:1556px;top:801px" width="75" height="55" viewBox="0 0 75 55"><rect x="15" y="2" width="6" height="1" fill="#444"/><rect x="24" y="2" width="6" height="1" fill="#222"/><rect x="16" y="4.0" width="18.0" height="1.5" fill="#888"/><rect x="16" y="6.0" width="18.0" height="1.5" fill="#888"/><rect x="16" y="8.0" width="12.0" height="1.5" fill="#111"/><rect x="3" y="13.0" width="9.7" height="1.5" fill="#666"/><rect x="3" y="15.3" width="14.0" height="1.5" fill="#111"/><rect x="3" y="17.6" width="14.0" height="1.5" fill="#111"/><rect x="3" y="19.9" width="14.0" height="1.5" fill="#111"/><rect x="3" y="22.2" width="14.0" height="1.5" fill="#666"/><rect x="3" y="24.5" width="14.0" height="1.5" fill="#666"/><rect x="3" y="26.8" width="14.0" height="1.5" fill="#111"/><rect x="3" y="29.1" width="14.0" height="1.5" fill="#111"/><rect x="3" y="31.4" width="14.0" height="1.5" fill="#666"/><rect x="3" y="33.7" width="10.9" height="1.5" fill="#111"/><rect x="3" y="36.0" width="14.0" height="1.5" fill="#111"/><rect x="3" y="38.3" width="14.0" height="1.5" fill="#888"/><rect x="3" y="40.6" width="14.0" height="1.5" fill="#888"/><rect x="3" y="42.9" width="9.6" height="1.5" fill="#666"/><rect x="3" y="45.2" width="14.0" height="1.5" fill="#222"/><rect x="3" y="47.5" width="11.3" height="1.5" fill="#888"/><rect x="3" y="49.8" width="14.0" height="1.5" fill="#222"/><rect x="19" y="12.0" width="15.0" height="1.5" fill="#888"/><rect x="19" y="14.3" width="10.2" height="1.5" fill="#888"/><rect x="19" y="16.6" width="15.0" height="1.5" fill="#111"/><rect x="19" y="18.9" width="15.0" height="1.5" fill="#222"/><rect x="19" y="21.2" width="15.0" height="1.5" fill="#111"/><rect x="19" y="23.5" width="15.0" height="1.5" fill="#888"/><rect x="19" y="25.8" width="15.0" height="1.5" fill="#888"/><rect x="19" y="28.1" width="8.4" height="1.5" fill="#222"/><rect x="19" y="30.4" width="12.5" height="1.5" fill="#222"/><rect x="19" y="32.7" width="15.0" height="1.5" fill="#222"/><rect x="19" y="35.0" width="10.7" height="1.5" fill="#111"/><rect x="19" y="37.3" width="15.0" height="1.5" fill="#111"/><rect x="19" y="39.6" width="15.0" height="1.5" fill="#222"/><rect x="19" y="41.9" width="15.0" height="1.5" fill="#111"/><rect x="19" y="44.2" width="15.0" height="1.5" fill="#111"/><rect x="19" y="46.5" width="15.0" height="1.5" fill="#111"/><rect x="19" y="48.8" width="15.0" height="1.5" fill="#888"/><rect x="19" y="51.1" width="15.0" height="1.5" fill="#888"/><rect x="43" y="2" width="6" height="1" fill="#444"/><rect x="51" y="2" width="8" height="1" fill="#444"/><rect x="40" y="5.0" width="17.9" height="1.5" fill="#111"/><rect x="40" y="7.1" width="12.7" height="1.5" fill="#888"/><rect x="40" y="9.2" width="14.5" height="1.5" fill="#111"/><rect x="40" y="11.3" width="12.9" height="1.5" fill="#111"/><rect x="40" y="13.4" width="11.7" height="1.5" fill="#111"/><rect x="40" y="15.5" width="12.0" height="1.5" fill="#888"/><rect x="40" y="18.0" width="15.0" height="1.5" fill="#666"/><rect x="40" y="20.3" width="12.6" height="1.5" fill="#888"/><rect x="40" y="22.6" width="15.0" height="1.5" fill="#888"/><rect x="40" y="24.9" width="8.1" height="1.5" fill="#666"/><rect x="40" y="27.2" width="15.0" height="1.5" fill="#666"/><rect x="40" y="29.5" width="15.0" height="1.5" fill="#888"/><rect x="40" y="31.8" width="15.0" height="1.5" fill="#222"/><rect x="40" y="34.1" width="15.0" height="1.5" fill="#222"/><rect x="40" y="36.4" width="15.0" height="1.5" fill="#111"/><rect x="40" y="38.7" width="15.0" height="1.5" fill="#111"/><rect x="40" y="41.0" width="15.0" height="1.5" fill="#111"/><rect x="40" y="43.3" width="15.0" height="1.5" fill="#111"/><rect x="40" y="45.6" width="15.0" height="1.5" fill="#666"/><rect x="40" y="47.9" width="15.0" height="1.5" fill="#222"/><rect x="40" y="50.2" width="15.0" height="1.5" fill="#222"/><rect x="57" y="18.0" width="15.0" height="1.5" fill="#111"/><rect x="57" y="20.3" width="15.0" height="1.5" fill="#222"/><rect x="57" y="22.6" width="15.0" height="1.5" fill="#222"/><rect x="57" y="24.9" width="15.0" height="1.5" fill="#888"/><rect x="57" y="27.2" width="10.5" height="1.5" fill="#222"/><rect x="57" y="29.5" width="15.0" height="1.5" fill="#111"/><rect x="57" y="31.8" width="15.0" height="1.5" fill="#666"/><rect x="57" y="34.1" width="15.0" height="1.5" fill="#222"/><rect x="57" y="36.4" width="15.0" height="1.5" fill="#666"/><rect x="57" y="38.7" width="15.0" height="1.5" fill="#666"/><rect x="57" y="41.0" width="8.1" height="1.5" fill="#666"/><rect x="57" y="43.3" width="8.7" height="1.5" fill="#888"/><rect x="57" y="45.6" width="15.0" height="1.5" fill="#111"/><rect x="57" y="47.9" width="15.0" height="1.5" fill="#111"/><rect x="57" y="50.2" width="15.0" height="1.5" fill="#888"/></svg>
<div class="t" style="left:1557px;top:806px;font-size:14px;line-height:14px;color:#000">A</div>
<div class="t" style="left:1615px;top:806px;font-size:14px;line-height:14px;color:#000">A</div>
<div class="a" style="left:1592px;top:793px;width:2px;height:69px;background:#c8c8c8"></div>
<div class="a" style="left:1343px;top:884px;width:517px;height:1px;background:#4c4c4c"></div>
<div class="t" style="left:1352px;top:900px;font-size:14.6px;line-height:15px;color:#f0f0f0">335 Pages in 168 Spreads</div>
<svg style="left:1717px;top:893px" width="29" height="21" viewBox="0 0 29 21"><path d="M10 8 V1 H17 L21 5 V15 H17" fill="none" stroke="#c8c8c8" stroke-width="1.6"/><path d="M17 1 V5 H21" fill="none" stroke="#c8c8c8" stroke-width="1.4"/><rect x="1" y="8" width="16" height="12" fill="#535353" stroke="#c8c8c8" stroke-width="1.6"/><path d="M23 17 H28 L25.5 20 Z" fill="#c8c8c8"/></svg>
<svg style="left:1766px;top:893px" width="18" height="20" viewBox="0 0 18 20"><rect x="1" y="1" width="16" height="18" fill="none" stroke="#c8c8c8" stroke-width="1.8"/><path d="M9 5.5 V14.5 M4.5 10 H13.5" stroke="#c8c8c8" stroke-width="1.8"/></svg>
<svg style="left:1807px;top:892px" width="19" height="22" viewBox="0 0 19 22"><path d="M0.5 4 H18.5" stroke="#c8c8c8" stroke-width="2"/><path d="M6.5 3 V1 H12.5 V3" fill="none" stroke="#c8c8c8" stroke-width="1.6"/><path d="M2.5 6 V21 H16.5 V6" fill="none" stroke="#c8c8c8" stroke-width="2"/><path d="M6.5 8 V18 M9.5 8 V18 M12.5 8 V18" stroke="#c8c8c8" stroke-width="1.4"/></svg>
<div class="a" style="left:1343px;top:924px;width:517px;height:2px;background:#262626"></div>
<div class="a" style="left:1343px;top:926px;width:517px;height:11px;background:#535353;border-bottom:1px solid #444"></div>
<svg style="left:1588px;top:927px" width="28" height="7" viewBox="0 0 28 7"><g fill="#2e2e2e"><rect x="0.0" y="0" width="1.2" height="7"/><rect x="2.8" y="0" width="1.2" height="7"/><rect x="5.6" y="0" width="1.2" height="7"/><rect x="8.399999999999999" y="0" width="1.2" height="7"/><rect x="11.2" y="0" width="1.2" height="7"/><rect x="14.0" y="0" width="1.2" height="7"/><rect x="16.799999999999997" y="0" width="1.2" height="7"/><rect x="19.599999999999998" y="0" width="1.2" height="7"/><rect x="22.4" y="0" width="1.2" height="7"/><rect x="25.2" y="0" width="1.2" height="7"/></g></svg>

<!-- RIGHT STRIP -->
<div class="a" style="left:1860px;top:131px;width:2px;height:890px;background:#3a3a3a"></div>
<div class="a" style="left:1862px;top:131px;width:42px;height:890px;background:#535353"></div>
<div class="a" style="left:1862px;top:131px;width:42px;height:17px;background:#444"></div>
<svg style="left:1897px;top:135px" width="6" height="10" viewBox="0 0 6 10"><path d="M5 1 L1 5 L5 9" fill="none" stroke="#d8d8d8" stroke-width="1.6"/></svg>
<div class="a" style="left:1862px;top:148px;width:42px;height:1px;background:#3a3a3a"></div>
<svg style="left:1876px;top:155px" width="28" height="6" viewBox="0 0 28 6"><g fill="#2e2e2e"><rect x="0.0" y="0" width="1.2" height="6"/><rect x="2.8" y="0" width="1.2" height="6"/><rect x="5.6" y="0" width="1.2" height="6"/><rect x="8.399999999999999" y="0" width="1.2" height="6"/><rect x="11.2" y="0" width="1.2" height="6"/><rect x="14.0" y="0" width="1.2" height="6"/><rect x="16.799999999999997" y="0" width="1.2" height="6"/><rect x="19.599999999999998" y="0" width="1.2" height="6"/><rect x="22.4" y="0" width="1.2" height="6"/><rect x="25.2" y="0" width="1.2" height="6"/></g></svg>
<div class="a" style="left:1869px;top:168px;width:40px;height:34px;background:#333;border-radius:4px;border:1px solid #444"></div>
<svg style="left:1878px;top:171px" width="28" height="31" viewBox="0 0 28 31"><path d="M2 10 L8 4 H12 V26 H2 Z" fill="#c8c8c8"/><path d="M16 4 H20 L26 10 V26 H16 Z" fill="#c8c8c8"/><rect x="13" y="0" width="2" height="31" fill="#c8c8c8"/></svg>
<svg style="left:1878px;top:219px" width="28" height="18" viewBox="0 0 28 18"><rect x="2" y="3" width="15" height="11" rx="5.5" fill="none" stroke="#c8c8c8" stroke-width="3.2"/><rect x="11" y="3.5" width="17" height="11" rx="5.5" fill="none" stroke="#c8c8c8" stroke-width="3.2"/></svg>
<svg style="left:1882px;top:257px" width="22" height="28" viewBox="0 0 22 28"><path d="M9 1 Q17 0 19.5 3 L15 6 Q11 4 9 6 Q8 9 14 12 Q21 16 19 22 Q17 26 10 27 L8 27 Q12 24 12 20 Q12 16 8 14 Q2 10 5 5 Q6 2 9 1 Z" fill="#c8c8c8"/><path d="M6 19 Q2 22 3 24 Q5 26 8 24 Q7 21 6 19 Z" fill="#c8c8c8"/></svg>
<svg style="left:1879px;top:299px" width="26" height="28" viewBox="0 0 26 28"><path d="M13 1 L25 8.5 L13 16 L1 8.5 Z" fill="#c8c8c8"/><path d="M4.5 14.5 L13 19.5 L21.5 14.5 L25 17 L13 25 L1 17 Z" fill="#c8c8c8"/></svg>
<div class="t" style="left:1882px;top:339px;font-family:'Liberation Serif';font-style:italic;font-size:31px;line-height:30px;color:#c8c8c8;-webkit-text-stroke:0.6px #c8c8c8">A</div>
<div class="a" style="left:1862px;top:378px;width:42px;height:2px;background:#3e3e3e"></div>
<svg style="left:1876px;top:385px" width="28" height="6" viewBox="0 0 28 6"><g fill="#2e2e2e"><rect x="0.0" y="0" width="1.2" height="6"/><rect x="2.8" y="0" width="1.2" height="6"/><rect x="5.6" y="0" width="1.2" height="6"/><rect x="8.399999999999999" y="0" width="1.2" height="6"/><rect x="11.2" y="0" width="1.2" height="6"/><rect x="14.0" y="0" width="1.2" height="6"/><rect x="16.799999999999997" y="0" width="1.2" height="6"/><rect x="19.599999999999998" y="0" width="1.2" height="6"/><rect x="22.4" y="0" width="1.2" height="6"/><rect x="25.2" y="0" width="1.2" height="6"/></g></svg>
<svg style="left:1879px;top:405px" width="26" height="19" viewBox="0 0 26 19"><g fill="#c8c8c8"><rect x="0" y="0" width="26" height="2"/><rect x="0" y="7" width="26" height="3.5"/><rect x="0" y="14" width="26" height="5"/></g></svg>
<svg style="left:1879px;top:449px" width="26" height="17" viewBox="0 0 26 17"><rect x="0.8" y="0.8" width="25" height="15.5" fill="none" stroke="#c8c8c8" stroke-width="1.6"/><g fill="#c8c8c8"><rect x="3" y="3" width="5" height="5" opacity=".6"/><rect x="9.5" y="3" width="5" height="5"/><rect x="16" y="3" width="5" height="5" opacity=".6"/><rect x="3" y="9.5" width="5" height="5"/><rect x="9.5" y="9.5" width="5" height="5" opacity=".6"/><rect x="16" y="9.5" width="5" height="5"/></g></svg>
<svg style="left:1879px;top:489px" width="26" height="19" viewBox="0 0 26 19"><defs><linearGradient id="g3" x1="0" y1="0" x2="1" y2="0"><stop offset="0" stop-color="#d0d0d0"/><stop offset="1" stop-color="#555"/></linearGradient></defs><rect x="0.8" y="0.8" width="25" height="17" fill="url(#g3)" stroke="#c8c8c8" stroke-width="1.6"/></svg>
<div class="a" style="left:1862px;top:524px;width:42px;height:2px;background:#3e3e3e"></div>
<svg style="left:1876px;top:530px" width="28" height="6" viewBox="0 0 28 6"><g fill="#2e2e2e"><rect x="0.0" y="0" width="1.2" height="6"/><rect x="2.8" y="0" width="1.2" height="6"/><rect x="5.6" y="0" width="1.2" height="6"/><rect x="8.399999999999999" y="0" width="1.2" height="6"/><rect x="11.2" y="0" width="1.2" height="6"/><rect x="14.0" y="0" width="1.2" height="6"/><rect x="16.799999999999997" y="0" width="1.2" height="6"/><rect x="19.599999999999998" y="0" width="1.2" height="6"/><rect x="22.4" y="0" width="1.2" height="6"/><rect x="25.2" y="0" width="1.2" height="6"/></g></svg>
<svg style="left:1880px;top:549px" width="24" height="24" viewBox="0 0 24 24"><rect x="1" y="1" width="13" height="13" fill="#c8c8c8"/><rect x="9" y="9" width="14" height="14" fill="#c8c8c8"/><rect x="9" y="9" width="5" height="5" fill="#535353" stroke="#c8c8c8" stroke-width="1.4"/></svg>
<div class="a" style="left:1862px;top:586px;width:42px;height:2px;background:#3e3e3e"></div>
<svg style="left:1876px;top:593px" width="28" height="6" viewBox="0 0 28 6"><g fill="#2e2e2e"><rect x="0.0" y="0" width="1.2" height="6"/><rect x="2.8" y="0" width="1.2" height="6"/><rect x="5.6" y="0" width="1.2" height="6"/><rect x="8.399999999999999" y="0" width="1.2" height="6"/><rect x="11.2" y="0" width="1.2" height="6"/><rect x="14.0" y="0" width="1.2" height="6"/><rect x="16.799999999999997" y="0" width="1.2" height="6"/><rect x="19.599999999999998" y="0" width="1.2" height="6"/><rect x="22.4" y="0" width="1.2" height="6"/><rect x="25.2" y="0" width="1.2" height="6"/></g></svg>
<svg style="left:1879px;top:611px" width="26" height="25" viewBox="0 0 26 25"><path d="M9 3 H14 Q16 1 18 3 H24 V10 Q22 12 24 14 V20 H14 Q12 18 10 20" fill="none" stroke="#c8c8c8" stroke-width="1.8"/><rect x="1" y="12" width="9" height="8" fill="#535353" stroke="#c8c8c8" stroke-width="1.6"/><rect x="6" y="16" width="9" height="8" fill="#535353" stroke="#c8c8c8" stroke-width="1.6"/></svg>
<svg style="left:1879px;top:655px" width="26" height="20" viewBox="0 0 26 20"><g fill="#c8c8c8"><rect x="0" y="0" width="26" height="1.6"/><rect x="0" y="18" width="26" height="1.6"/><rect x="0" y="5" width="6" height="1.4"/><rect x="0" y="9" width="6" height="1.4"/><rect x="0" y="13" width="6" height="1.4"/><rect x="20" y="5" width="6" height="1.4"/><rect x="20" y="9" width="6" height="1.4"/><rect x="20" y="13" width="6" height="1.4"/><circle cx="13" cy="9.8" r="6.2"/></g></svg>
<div class="a" style="left:1862px;top:690px;width:42px;height:2px;background:#3e3e3e"></div>

<!-- DIALOG -->
<div class="a" style="left:551px;top:497px;width:802px;height:444px;background:#535353;box-shadow:0 0 18px rgba(0,0,0,.45)"></div>
<div class="a" style="left:551px;top:497px;width:802px;height:38px;background:#04838a"></div>
<div class="t" style="left:560px;top:510px;font-size:14.7px;line-height:15px;color:#f4f4f4">Background Task Alert</div>
<div class="a" style="left:1327px;top:506px;width:25px;height:25px;background:#c9504f"></div>
<svg style="left:1335px;top:514px" width="9" height="8" viewBox="0 0 9 8"><path d="M1 0.5 L8 7.5 M8 0.5 L1 7.5" stroke="#fff" stroke-width="1.9"/></svg>
<div class="a" style="left:663px;top:567px;width:17px;height:17px;border-radius:50%;background:#f44040"></div>
<div class="t" style="left:688px;top:569px;font-size:19.3px;line-height:19px;font-weight:700;color:#fafafa">1 problem (1 failure) was found with a background task:</div>
<div class="a" style="left:656px;top:603px;width:667px;height:269px;border:1px solid #5e5e5e"></div>
<div class="a" style="left:657px;top:668px;width:665px;height:1px;background:#5e5e5e"></div>
<svg style="left:671px;top:633px" width="8" height="13" viewBox="0 0 8 13"><path d="M1 1 L6.5 6.5 L1 12" fill="none" stroke="#bdbdbd" stroke-width="1.3"/></svg>
<div class="t" style="left:689px;top:633px;font-size:16px;line-height:16px;color:#e8141c">Export: "&#1508;&#1497;&#1512;&#1493;&#1513; &#1506;&#1500; &#1499;&#1502;&#1492; &#1488;&#1490;&#1491;&#1493;&#1514;.pdf" (1)</div>
<svg style="left:588px;top:639px" width="46" height="45" viewBox="0 0 46 45"><path d="M23 1.5 Q24.5 1.5 25.5 3 L45 42 Q45.5 44 43.5 44 H2.5 Q0.5 44 1 42 L20.5 3 Q21.5 1.5 23 1.5 Z" fill="#f5c400"/><rect x="20.5" y="13" width="5" height="15" rx="1" fill="#535353"/><rect x="20.5" y="31.5" width="5" height="5" rx="1" fill="#535353"/></svg>
<div class="a" style="left:575px;top:886px;width:18px;height:18px;border:1.5px solid #c8c8c8;border-radius:2.5px"></div>
<div class="t" style="left:603px;top:888px;font-size:18px;line-height:18px;color:#f2f2f2">Show alerts in Background Tasks panel only</div>
<div class="a" style="left:1151px;top:880px;width:135px;height:39px;border:3px solid #fff;border-radius:20px"></div>
<div class="t" style="left:1151px;top:892px;width:135px;text-align:center;font-size:18px;line-height:18px;color:#f4f4f4">OK</div>

</body></html>
